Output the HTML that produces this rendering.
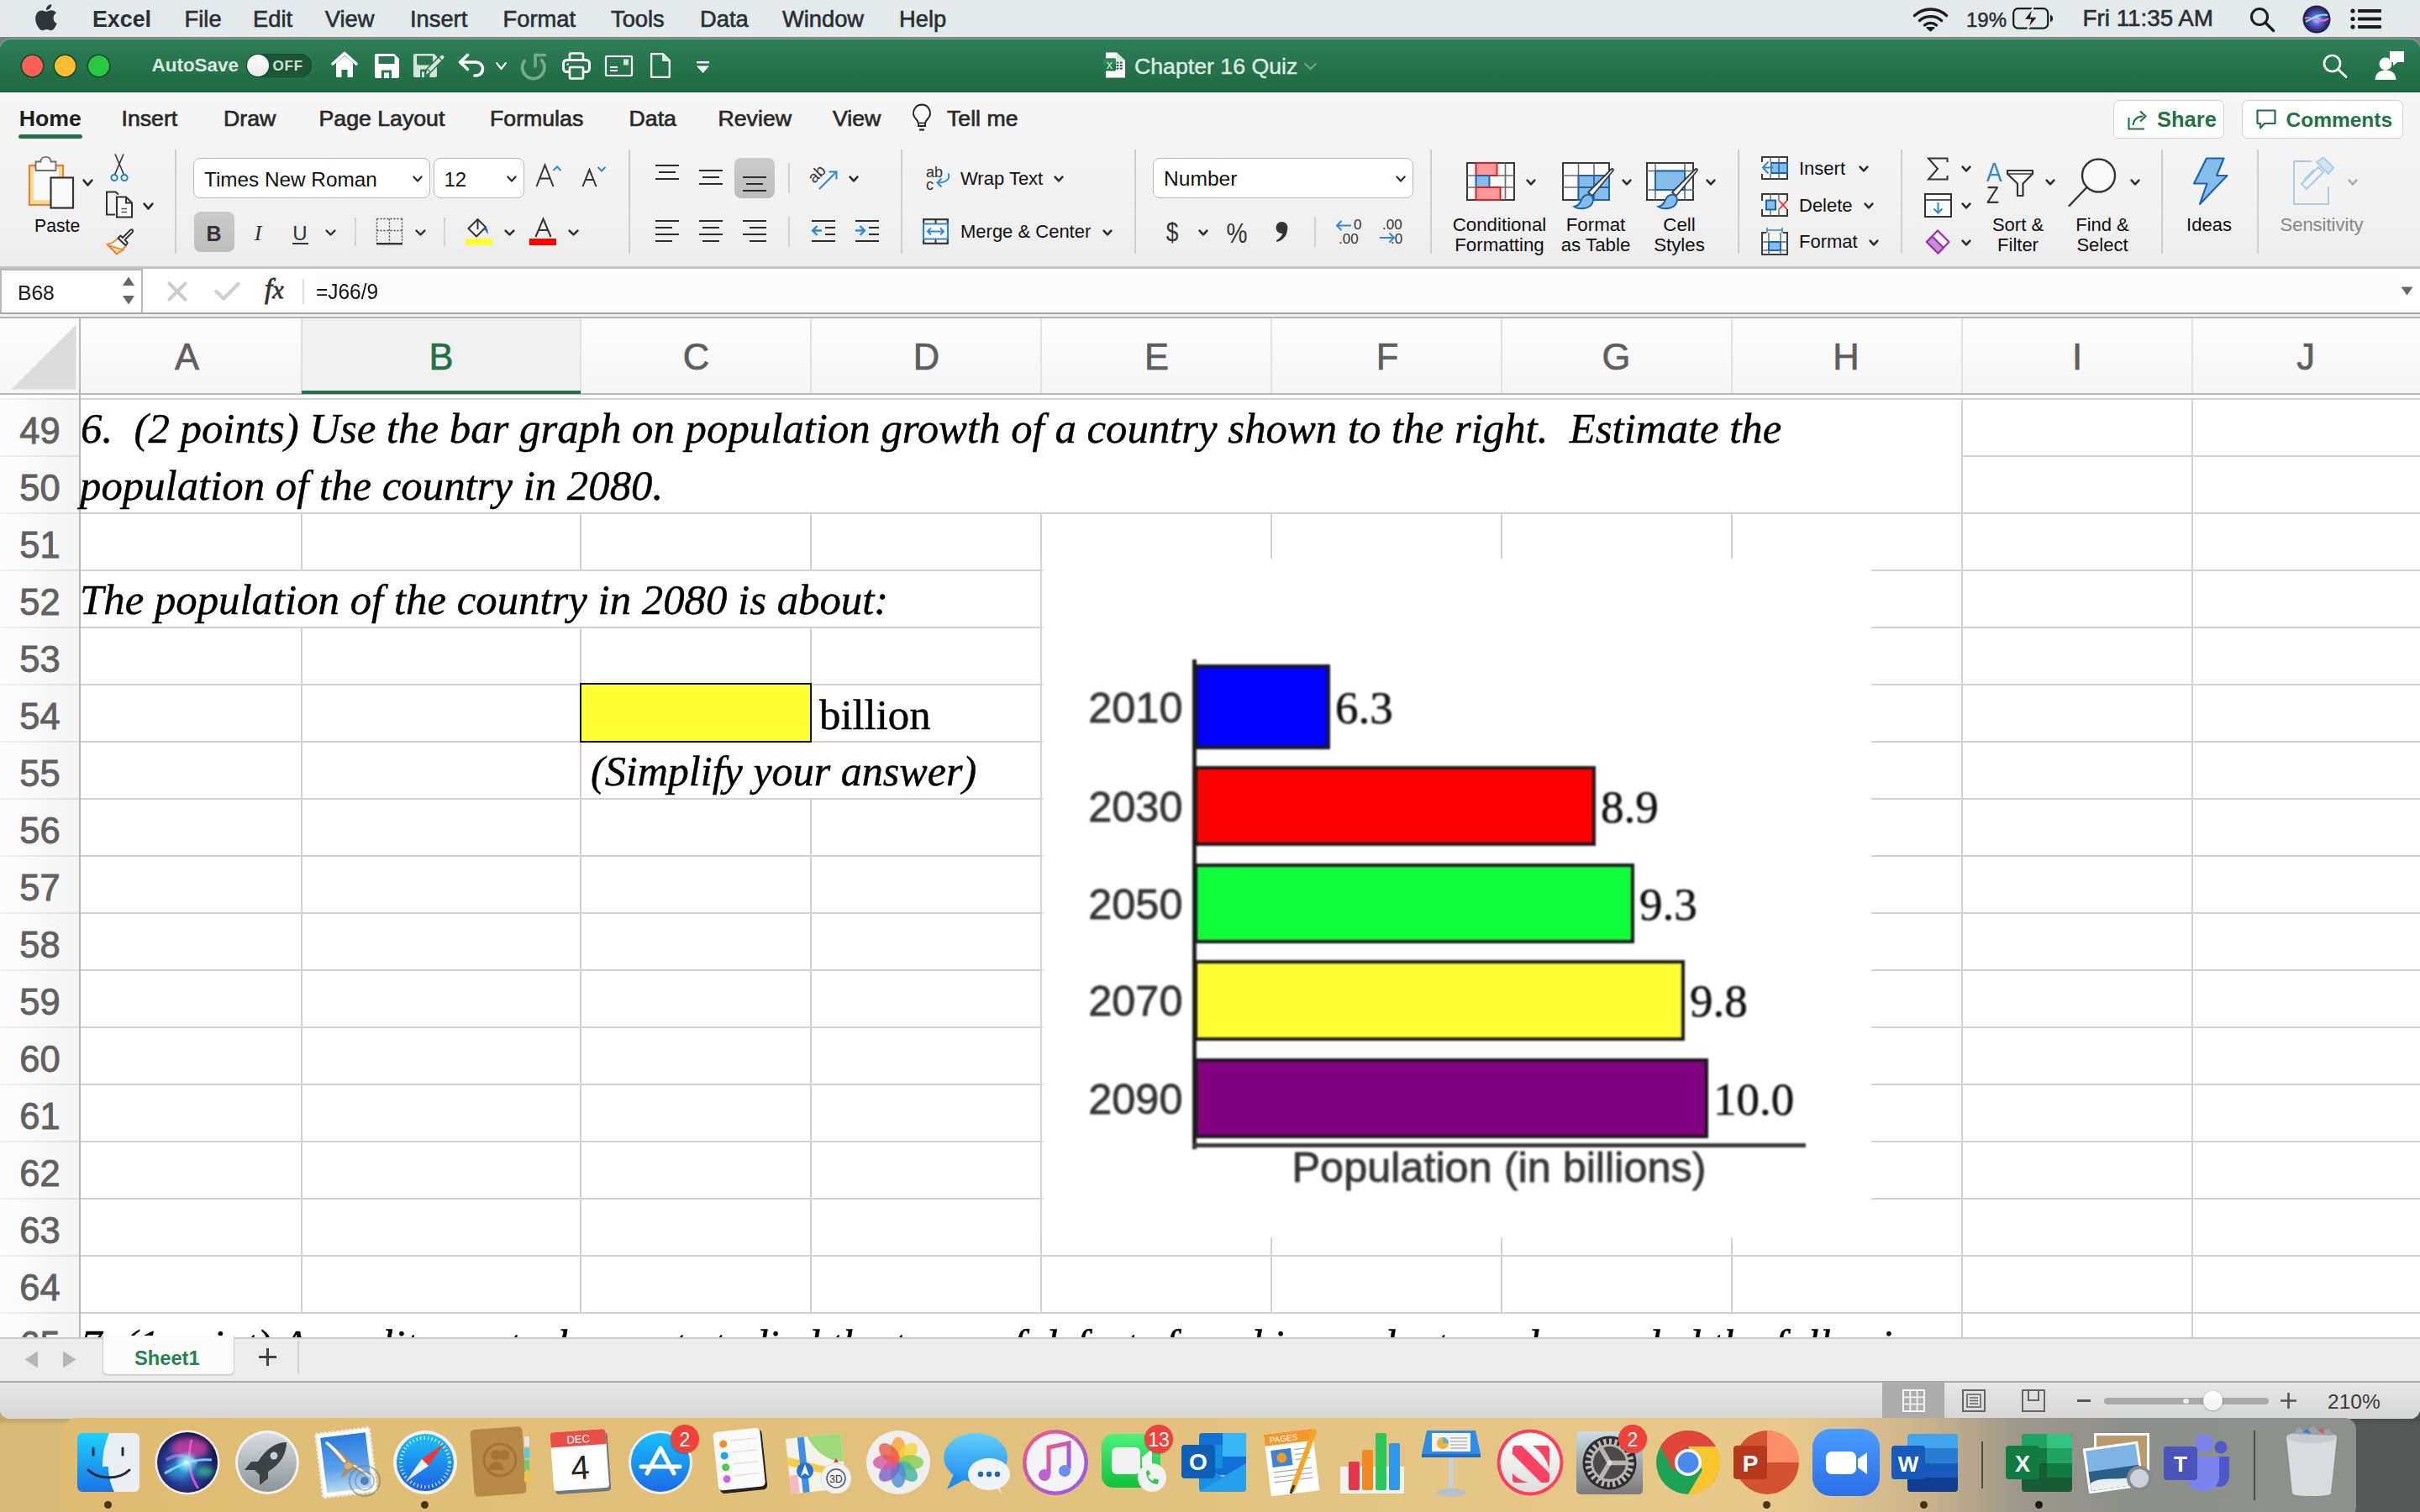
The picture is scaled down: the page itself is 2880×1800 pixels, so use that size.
<!DOCTYPE html><html><head><meta charset="utf-8"><style>html,body{margin:0;padding:0;width:2880px;height:1800px;overflow:hidden;background:#fff;position:relative;font-family:"Liberation Sans",sans-serif}.t{position:absolute;line-height:0;white-space:pre}.r{position:absolute}.s{position:absolute;overflow:visible}</style></head><body>
<div class="r" style="left:0px;top:0px;width:2880px;height:1800px;background:#7d7d7d"></div>
<div class="r" style="left:0px;top:1600px;width:2880px;height:200px;background:linear-gradient(90deg,#c9a967 0,#dcbd7c 1500px,#d6b77a 2150px,#7c7b76 2400px,#5b5d5c 2600px,#4f5150 2880px)"></div>
<div class="r" style="left:0px;top:0px;width:2880px;height:44px;background:#e4e9ec"></div>
<div class="r" style="left:0px;top:44px;width:2880px;height:2px;background:#7a8187"></div>
<div class="r" style="left:0px;top:46px;width:2880px;height:1643px;background:#f3f3f3;border-radius:12px 12px 12px 12px;overflow:hidden"></div>
<div class="r" style="left:0px;top:46px;width:2880px;height:64px;background:linear-gradient(#2f7f59,#236f48 70%,#1f6b44);border-radius:12px 12px 0 0;box-shadow:inset 0 1px 0 #7fb294"></div>
<div class="r" style="left:0px;top:108px;width:2880px;height:2px;background:#195c39"></div>
<svg class="s" style="left:42px;top:3.5px;" width="28" height="31" viewBox="0 0 28 31"><path fill="#30373b" d="M23.2 16.6c0-4.3 3.5-6.3 3.7-6.4-2-2.9-5.1-3.3-6.2-3.4-2.6-.3-5.2 1.6-6.5 1.6-1.4 0-3.4-1.5-5.6-1.5C5.7 6.9 3 8.6 1.6 11.2c-3 5.2-.8 12.9 2.2 17.1 1.4 2.1 3.1 4.4 5.3 4.3 2.1-.1 3-1.4 5.5-1.4s3.3 1.4 5.6 1.3c2.3 0 3.7-2.1 5.1-4.2 1.6-2.4 2.3-4.7 2.3-4.8-.1 0-4.4-1.7-4.4-6.9zM19 4.1C20.2 2.7 21 .8 20.7-1.1c-1.7.1-3.7 1.1-4.9 2.5-1.1 1.2-2 3.2-1.8 5 1.9.2 3.8-.9 5-2.3z" transform="translate(0,2) scale(0.93)"/></svg>
<div class="t" style="left:110px;top:22.71px;font-size:26.8px;font-family:'Liberation Sans', sans-serif;font-weight:700;color:#2a3034;font-style:normal;">Excel</div>
<div class="t" style="left:219.6px;top:22.54px;font-size:27.3px;font-family:'Liberation Sans', sans-serif;font-weight:400;color:#2a3034;font-style:normal;-webkit-text-stroke:0.6px #2a3034">File</div>
<div class="t" style="left:301px;top:22.54px;font-size:27.3px;font-family:'Liberation Sans', sans-serif;font-weight:400;color:#2a3034;font-style:normal;-webkit-text-stroke:0.6px #2a3034">Edit</div>
<div class="t" style="left:386.8px;top:22.54px;font-size:27.3px;font-family:'Liberation Sans', sans-serif;font-weight:400;color:#2a3034;font-style:normal;-webkit-text-stroke:0.6px #2a3034">View</div>
<div class="t" style="left:488px;top:22.54px;font-size:27.3px;font-family:'Liberation Sans', sans-serif;font-weight:400;color:#2a3034;font-style:normal;-webkit-text-stroke:0.6px #2a3034">Insert</div>
<div class="t" style="left:598.6px;top:22.54px;font-size:27.3px;font-family:'Liberation Sans', sans-serif;font-weight:400;color:#2a3034;font-style:normal;-webkit-text-stroke:0.6px #2a3034">Format</div>
<div class="t" style="left:727px;top:22.54px;font-size:27.3px;font-family:'Liberation Sans', sans-serif;font-weight:400;color:#2a3034;font-style:normal;-webkit-text-stroke:0.6px #2a3034">Tools</div>
<div class="t" style="left:833px;top:22.54px;font-size:27.3px;font-family:'Liberation Sans', sans-serif;font-weight:400;color:#2a3034;font-style:normal;-webkit-text-stroke:0.6px #2a3034">Data</div>
<div class="t" style="left:931px;top:22.54px;font-size:27.3px;font-family:'Liberation Sans', sans-serif;font-weight:400;color:#2a3034;font-style:normal;-webkit-text-stroke:0.6px #2a3034">Window</div>
<div class="t" style="left:1070px;top:22.54px;font-size:27.3px;font-family:'Liberation Sans', sans-serif;font-weight:400;color:#2a3034;font-style:normal;-webkit-text-stroke:0.6px #2a3034">Help</div>
<svg class="s" style="left:2276px;top:7px;" width="43" height="30" viewBox="0 0 43 30"><path d="M2.5 11.5 C13 1.5 30 1.5 40.5 11.5" fill="none" stroke="#1c1c1c" stroke-width="3.4" stroke-linecap="round"/><path d="M8.5 17.5 C15.5 11 27.5 11 34.5 17.5" fill="none" stroke="#1c1c1c" stroke-width="3.4" stroke-linecap="round"/><path d="M14.5 23 C18.5 19.5 24.5 19.5 28.5 23" fill="none" stroke="#1c1c1c" stroke-width="3.4" stroke-linecap="round"/><path d="M17.5 26 L21.5 29.5 L25.5 26 Z" fill="#1c1c1c" stroke="#1c1c1c" stroke-width="2" stroke-linejoin="round"/></svg>
<div class="t" style="left:2340px;top:23.68px;font-size:24px;font-family:'Liberation Sans', sans-serif;font-weight:400;color:#2a3034;font-style:normal;-webkit-text-stroke:0.5px #2a3034">19%</div>
<svg class="s" style="left:2395px;top:8px;" width="49" height="28" viewBox="0 0 49 28"><rect x="1.2" y="2.2" width="41" height="23.5" rx="5.5" fill="none" stroke="#1c1c1c" stroke-width="2.2"/><path d="M45 10 C47 10 48 11.5 48 14 C48 16.5 47 18 45 18 Z" fill="#1c1c1c"/><path d="M24.5 1 L13.5 15.5 H21.5 L18 27 L30 12 H22 Z" fill="#1c1c1c" stroke="#e6eaed" stroke-width="1.6"/></svg>
<div class="t" style="left:2478.5px;top:22.37px;font-size:27.8px;font-family:'Liberation Sans', sans-serif;font-weight:400;color:#2a3034;font-style:normal;-webkit-text-stroke:0.6px #2a3034">Fri 11:35 AM</div>
<svg class="s" style="left:2677px;top:8px;" width="31" height="30" viewBox="0 0 31 30"><circle cx="12" cy="12" r="9.5" fill="none" stroke="#1c1c1c" stroke-width="3"/><path d="M19 19 L28.5 28.5" stroke="#1c1c1c" stroke-width="3.4" stroke-linecap="round"/></svg>
<svg class="s" style="left:2739px;top:6px;" width="36" height="34" viewBox="0 0 36 34"><defs><radialGradient id="siri0" cx=".5" cy=".5" r=".5"><stop offset="0" stop-color="#b4f2ff"/><stop offset=".4" stop-color="#5a5fd8"/><stop offset="1" stop-color="#1a1840"/></radialGradient></defs><circle cx="18" cy="17" r="16.5" fill="url(#siri0)"/><path d="M4 16 C12 11 22 24 32 16" fill="none" stroke="#ff66cc" stroke-width="2.2"/><path d="M5 20 C14 15 22 10 31 12" fill="none" stroke="#66ffee" stroke-width="2"/></svg>
<svg class="s" style="left:2797px;top:10px;" width="38" height="26" viewBox="0 0 38 26"><g fill="#1c1c1c"><circle cx="3" cy="3" r="2.6"/><circle cx="3" cy="12.5" r="2.6"/><circle cx="3" cy="22" r="2.6"/><rect x="9" y="1" width="28" height="4" rx="1"/><rect x="9" y="10.5" width="28" height="4" rx="1"/><rect x="9" y="20" width="28" height="4" rx="1"/></g></svg>
<div class="r" style="left:25.5px;top:65.5px;width:25px;height:25px;border-radius:50%;background:#fe5f57;box-shadow:0 0 0 1.5px rgba(10,50,30,.7)"></div>
<div class="r" style="left:65.2px;top:65.5px;width:25px;height:25px;border-radius:50%;background:#febc2e;box-shadow:0 0 0 1.5px rgba(10,50,30,.7)"></div>
<div class="r" style="left:105.3px;top:65.5px;width:25px;height:25px;border-radius:50%;background:#28c840;box-shadow:0 0 0 1.5px rgba(10,50,30,.7)"></div>
<div class="t" style="left:180.6px;top:78.24px;font-size:22.4px;font-family:'Liberation Sans', sans-serif;font-weight:700;color:#dcebe2;font-style:normal;">AutoSave</div>
<div class="r" style="left:293px;top:64px;width:78px;height:28px;background:#1c5536;border-radius:14px;box-shadow:inset 0 0 0 1px #174a2f"></div>
<div class="r" style="left:294px;top:65px;width:26px;height:26px;background:linear-gradient(#fff,#e8e8e8);border-radius:50%;box-shadow:0 1px 1px rgba(0,0,0,.3)"></div>
<div class="t" style="left:324.5px;top:79.11px;font-size:17px;font-family:'Liberation Sans', sans-serif;font-weight:700;color:#d0e3d7;font-style:normal;letter-spacing:0.8px">OFF</div>
<svg class="s" style="left:393px;top:61px;" width="34" height="32" viewBox="0 0 34 32"><path d="M3 15 L17 2.5 L31 15" fill="none" stroke="#ffffff" stroke-width="3.6" stroke-linecap="round" stroke-linejoin="round"/><path d="M7 14 L17 5.5 L27 14 V29.5 a1.5 1.5 0 0 1 -1.5 1.5 H20.5 V22 H13.5 V31 H8.5 a1.5 1.5 0 0 1 -1.5 -1.5 Z" fill="#ffffff"/></svg>
<svg class="s" style="left:445.5px;top:63.5px;" width="29" height="29" viewBox="0 0 29 29"><path d="M2 0 H23 L29 6 V27 a2 2 0 0 1 -2 2 H2 a2 2 0 0 1 -2 -2 V2 a2 2 0 0 1 2 -2 Z" fill="#ffffff"/><rect x="4.5" y="3" width="19" height="9" fill="#2a7650"/><rect x="8" y="19.5" width="12" height="9.5" fill="#2a7650"/><rect x="11" y="22.5" width="6" height="6.5" fill="#ffffff"/></svg>
<svg class="s" style="left:491px;top:63px;" width="38" height="30" viewBox="0 0 38 30"><path d="M3 1 H25.5 L29 4.5 V27 A2 2 0 0 1 27 29 H3 A2 2 0 0 1 1 27 V3 A2 2 0 0 1 3 1 Z" fill="#d6e5dc"/><path d="M5 3.5 H24 V12 A2 2 0 0 1 22 14.5 H7 A2 2 0 0 1 5 12.5 Z" fill="#2a7650"/><rect x="9" y="19.5" width="11.5" height="9.5" fill="#2a7650"/><rect x="11" y="22.5" width="3" height="6.5" fill="#d6e5dc"/><path d="M14.5 27.5 L17 19 L33 3 C34.5 1.5 36.5 1.5 37.5 3 C38.8 4.3 38.5 6 37 7.5 L21 23.5 Z" fill="#d6e5dc" stroke="#2a7650" stroke-width="1.6" stroke-linejoin="round"/><path d="M18 19.5 L21 22.5 M31 5 L35 9" stroke="#2a7650" stroke-width="1.4"/></svg>
<svg class="s" style="left:545px;top:63px;" width="34" height="30" viewBox="0 0 34 30"><path d="M11.5 2.5 L2.5 11 L11.5 19.5" fill="none" stroke="#ffffff" stroke-width="3.6" stroke-linecap="round" stroke-linejoin="round"/><path d="M3 11 H21.5 A8 8 0 0 1 21.5 27 H20" fill="none" stroke="#ffffff" stroke-width="3.6" stroke-linecap="round"/></svg>
<svg class="s" style="left:589.5px;top:74px;" width="13" height="9.5" viewBox="0 0 13 9.5"><path d="M1.2 1.2 L6.5 8 L11.8 1.2" fill="none" stroke="#ffffff" stroke-width="2.1" stroke-linecap="round" stroke-linejoin="round"/></svg>
<svg class="s" style="left:618px;top:62px;" width="34" height="34" viewBox="0 0 34 34"><path d="M6.2 10.5 A13.2 13.2 0 1 0 26.5 9.5" fill="none" stroke="#76ab8c" stroke-width="3.6" stroke-linecap="round"/><path d="M19 17 V3.5 H30.5" fill="none" stroke="#76ab8c" stroke-width="3.6" stroke-linecap="round" stroke-linejoin="miter"/></svg>
<svg class="s" style="left:669px;top:61.5px;" width="34" height="33" viewBox="0 0 34 33"><rect x="9" y="1.5" width="16" height="8" rx="1.5" fill="none" stroke="#ffffff" stroke-width="2.6"/><rect x="1.5" y="9.5" width="31" height="14" rx="4" fill="none" stroke="#ffffff" stroke-width="3"/><rect x="9" y="18" width="16" height="13.5" rx="1" fill="#2a7650" stroke="#ffffff" stroke-width="2.6"/><rect x="5.5" y="13.5" width="2.5" height="2" fill="#ffffff"/></svg>
<svg class="s" style="left:719.5px;top:65.5px;" width="33" height="25" viewBox="0 0 33 25"><rect x="1" y="1" width="31" height="23" rx="1" fill="none" stroke="#ffffff" stroke-width="2.2"/><rect x="22" y="4.5" width="6" height="7" fill="#d3e4d9"/><rect x="6" y="13" width="9" height="2" fill="#ffffff"/><rect x="6" y="17" width="9" height="2" fill="#ffffff"/></svg>
<svg class="s" style="left:774px;top:63px;" width="24" height="30" viewBox="0 0 24 30"><path d="M1.2 1.2 H15 L22.8 9 V28.8 H1.2 Z" fill="none" stroke="#ffffff" stroke-width="2.2" stroke-linejoin="round"/><path d="M15 1.2 V9 H22.8" fill="#d3e4d9" stroke="#ffffff" stroke-width="1.5"/></svg>
<svg class="s" style="left:827.5px;top:72.5px;" width="17" height="15" viewBox="0 0 17 15"><rect x="1" y="0" width="15" height="2.4" fill="#ffffff"/><path d="M1 5.5 H16 L8.5 14 Z" fill="#ffffff"/></svg>
<svg class="s" style="left:1313px;top:62px;" width="27" height="31" viewBox="0 0 27 31"><path d="M3 0.5 H16 L26 10 V30.5 H3 Z" fill="#fff"/><path d="M16 0.5 V10 H26" fill="#d9e6de"/><g fill="#1e6b43"><rect x="15.5" y="11.5" width="3" height="2.2"/><rect x="19.8" y="11.5" width="3" height="2.2"/><rect x="15.5" y="15" width="3" height="2.2"/><rect x="19.8" y="15" width="3" height="2.2"/><rect x="15.5" y="18.5" width="3" height="2.2"/><rect x="19.8" y="18.5" width="3" height="2.2"/></g><rect x="0" y="7.5" width="15" height="15" rx="1.5" fill="#1f7a4b"/><rect x="0" y="7.5" width="15" height="7" rx="1.5" fill="#2b8c59"/><text x="7.5" y="19.5" font-family="Liberation Sans" font-size="11" fill="#fff" text-anchor="middle">X</text></svg>
<div class="t" style="left:1350px;top:79.25px;font-size:26.7px;font-family:'Liberation Sans', sans-serif;font-weight:400;color:#dfece5;font-style:normal;-webkit-text-stroke:0.4px #dfece5">Chapter 16 Quiz</div>
<svg class="s" style="left:1551px;top:74px;" width="17" height="10" viewBox="0 0 17 10"><path d="M1.5 1.5 L8.5 8 L15.5 1.5" fill="none" stroke="#6fa687" stroke-width="2.2"/></svg>
<svg class="s" style="left:2764px;top:64px;" width="30" height="29" viewBox="0 0 30 29"><circle cx="11.5" cy="11.5" r="9.5" fill="none" stroke="#ffffff" stroke-width="2.6"/><path d="M18.5 18.5 L28 27.5" stroke="#ffffff" stroke-width="2.8" stroke-linecap="round"/></svg>
<svg class="s" style="left:2825px;top:59px;" width="38" height="37" viewBox="0 0 38 37"><circle cx="14" cy="17" r="7.5" fill="#ffffff"/><path d="M1.5 36 C2 28 7 24.5 14 24.5 C21 24.5 26 28 26.5 36 Z" fill="#ffffff"/><path d="M19 2 H36 V15 H28 L23 19.5 V15 H19 Z" fill="#ffffff"/></svg>
<div class="r" style="left:0px;top:110px;width:2880px;height:208px;background:linear-gradient(#f6f6f6,#f2f2f2 60%,#ececec)"></div>
<div class="r" style="left:0px;top:317px;width:2880px;height:3px;background:#c3c3c3"></div>
<div class="t" style="left:22.7px;top:140.75px;font-size:26.7px;font-family:'Liberation Sans', sans-serif;font-weight:700;color:#1e1e1e;font-style:normal;">Home</div>
<div class="r" style="left:22px;top:160px;width:76px;height:5px;background:#217346;border-radius:3px"></div>
<div class="t" style="left:144.5px;top:140.75px;font-size:26.7px;font-family:'Liberation Sans', sans-serif;font-weight:400;color:#2a2a2a;font-style:normal;-webkit-text-stroke:0.7px #2a2a2a">Insert</div>
<div class="t" style="left:266px;top:140.75px;font-size:26.7px;font-family:'Liberation Sans', sans-serif;font-weight:400;color:#2a2a2a;font-style:normal;-webkit-text-stroke:0.7px #2a2a2a">Draw</div>
<div class="t" style="left:379.5px;top:140.75px;font-size:26.7px;font-family:'Liberation Sans', sans-serif;font-weight:400;color:#2a2a2a;font-style:normal;-webkit-text-stroke:0.7px #2a2a2a">Page Layout</div>
<div class="t" style="left:583px;top:140.75px;font-size:26.7px;font-family:'Liberation Sans', sans-serif;font-weight:400;color:#2a2a2a;font-style:normal;-webkit-text-stroke:0.7px #2a2a2a">Formulas</div>
<div class="t" style="left:748.6px;top:140.75px;font-size:26.7px;font-family:'Liberation Sans', sans-serif;font-weight:400;color:#2a2a2a;font-style:normal;-webkit-text-stroke:0.7px #2a2a2a">Data</div>
<div class="t" style="left:854.5px;top:140.75px;font-size:26.7px;font-family:'Liberation Sans', sans-serif;font-weight:400;color:#2a2a2a;font-style:normal;-webkit-text-stroke:0.7px #2a2a2a">Review</div>
<div class="t" style="left:991px;top:140.75px;font-size:26.7px;font-family:'Liberation Sans', sans-serif;font-weight:400;color:#2a2a2a;font-style:normal;-webkit-text-stroke:0.7px #2a2a2a">View</div>
<svg class="s" style="left:1085px;top:123px;" width="24" height="33" viewBox="0 0 24 33"><path d="M12 1.5 a10 10 0 0 0 -7 17 c1.5 1.6 2.5 3.2 3 5.5 V27 H16 V24 c.5 -2.3 1.5 -3.9 3 -5.5 A10 10 0 0 0 12 1.5 Z" fill="#fafafa" stroke="#222" stroke-width="1.9"/><path d="M8.5 23.5 H15.5" stroke="#222" stroke-width="1.6"/><path d="M9 31.5 H15" stroke="#222" stroke-width="2.2"/></svg>
<div class="t" style="left:1127px;top:140.75px;font-size:26.7px;font-family:'Liberation Sans', sans-serif;font-weight:400;color:#2a2a2a;font-style:normal;-webkit-text-stroke:0.7px #2a2a2a">Tell me</div>
<div class="r" style="left:2515px;top:119px;width:132px;height:46px;background:#fff;border:1.5px solid #d2d2d2;border-radius:7px;box-sizing:border-box"></div>
<svg class="s" style="left:2532px;top:130px;" width="24" height="25" viewBox="0 0 24 25"><path d="M1.5 10 V23.5 H20" fill="none" stroke="#217346" stroke-width="2.2"/><path d="M6.5 19 C7.5 12 11.5 8.5 18.5 8.5" fill="none" stroke="#217346" stroke-width="2.2"/><path d="M15 2.5 L21.5 8.5 L15 14.5" fill="none" stroke="#217346" stroke-width="2.2" stroke-linejoin="round"/></svg>
<div class="t" style="left:2567px;top:142.16px;font-size:25.5px;font-family:'Liberation Sans', sans-serif;font-weight:700;color:#217346;font-style:normal;">Share</div>
<div class="r" style="left:2668px;top:119px;width:192px;height:46px;background:#fff;border:1.5px solid #d2d2d2;border-radius:7px;box-sizing:border-box"></div>
<svg class="s" style="left:2685px;top:130px;" width="24" height="25" viewBox="0 0 24 25"><path d="M1.5 1.5 H22.5 V17 H10 L5 22.5 V17 H1.5 Z" fill="none" stroke="#217346" stroke-width="2.2" stroke-linejoin="round"/></svg>
<div class="t" style="left:2720.5px;top:142.51px;font-size:24.5px;font-family:'Liberation Sans', sans-serif;font-weight:700;color:#217346;font-style:normal;">Comments</div>
<div class="r" style="left:208px;top:178px;width:2px;height:124px;background:#cdcdcd"></div>
<div class="r" style="left:748px;top:178px;width:2px;height:124px;background:#cdcdcd"></div>
<div class="r" style="left:1072px;top:178px;width:2px;height:124px;background:#cdcdcd"></div>
<div class="r" style="left:1350px;top:178px;width:2px;height:124px;background:#cdcdcd"></div>
<div class="r" style="left:1702px;top:178px;width:2px;height:124px;background:#cdcdcd"></div>
<div class="r" style="left:2068px;top:178px;width:2px;height:124px;background:#cdcdcd"></div>
<div class="r" style="left:2262px;top:178px;width:2px;height:124px;background:#cdcdcd"></div>
<div class="r" style="left:2572px;top:178px;width:2px;height:124px;background:#cdcdcd"></div>
<div class="r" style="left:2686px;top:178px;width:2px;height:124px;background:#cdcdcd"></div>
<svg class="s" style="left:33px;top:186px;" width="56" height="63" viewBox="0 0 56 63"><rect x="2" y="11" width="40" height="47" fill="#f7da9a" stroke="#e8832f" stroke-width="2.2"/><rect x="7" y="15" width="30" height="37" fill="#fafafa"/><path d="M9.5 17 V6.5 H15.5 C15.5 2.5 18 0.8 21.5 0.8 C25 0.8 27.5 2.5 27.5 6.5 H33.5 V17 Z" fill="#fafafa" stroke="#6e6e6e" stroke-width="1.8"/><rect x="27.5" y="25.5" width="26.5" height="36" fill="#fafafa" stroke="#333" stroke-width="2.2"/></svg>
<svg class="s" style="left:97.5px;top:212.5px;" width="13" height="9" viewBox="0 0 13 9"><path d="M1.6 1.6 L6.5 7.4 L11.399999999999999 1.6" fill="none" stroke="#2d2d2d" stroke-width="2.6" stroke-linecap="round" stroke-linejoin="round"/></svg>
<div class="t" style="left:41px;top:268.65px;font-size:21.2px;font-family:'Liberation Sans', sans-serif;font-weight:400;color:#111;font-style:normal;">Paste</div>
<svg class="s" style="left:131px;top:183px;" width="22" height="34" viewBox="0 0 22 34"><path d="M5.5 25 L16 0.5 M16.5 25 L6 0.5" stroke="#333" stroke-width="1.6"/><circle cx="5" cy="28.5" r="3.6" fill="none" stroke="#1f7fd0" stroke-width="2"/><circle cx="17" cy="28.5" r="3.6" fill="none" stroke="#1f7fd0" stroke-width="2"/></svg>
<svg class="s" style="left:125px;top:227px;" width="34" height="34" viewBox="0 0 34 34"><path d="M12 28.5 H2 V1.5 H12.5 L16 4.5" fill="none" stroke="#333" stroke-width="2"/><path d="M14 7.5 H25 L32 14.5 V31.5 H14 Z" fill="#fafafa" stroke="#333" stroke-width="2.1"/><path d="M25 7.5 V14.5 H32" fill="none" stroke="#333" stroke-width="2"/><path d="M19.5 21.5 H26 M19.5 25.5 H26" stroke="#555" stroke-width="1.6"/></svg>
<svg class="s" style="left:169.5px;top:240.5px;" width="13" height="9" viewBox="0 0 13 9"><path d="M1.6 1.6 L6.5 7.4 L11.399999999999999 1.6" fill="none" stroke="#2d2d2d" stroke-width="2.6" stroke-linecap="round" stroke-linejoin="round"/></svg>
<svg class="s" style="left:125px;top:271px;" width="34" height="33" viewBox="0 0 34 33"><path d="M2.5 20 C8 19 12.5 16 15.5 12.5 L25 22 L14 31.5 Z" fill="#fafafa" stroke="#e8832f" stroke-width="1.8" stroke-linejoin="round"/><path d="M4 21 L22 26.5 L14 31 Z" fill="#f7da9a" stroke="#e8832f" stroke-width="1.6"/><path d="M15.5 12.5 L18.5 9.5 L21 12 L30 3 C31 2 32.5 2 33 3 C33.5 3.8 33.3 4.8 32.5 5.5 L23.5 14.5 L26 17 C26.8 17.8 26.8 18.8 26 19.5 L24.5 21 Z" fill="#fafafa" stroke="#333" stroke-width="1.9" stroke-linejoin="round"/></svg>
<div class="r" style="left:230px;top:188px;width:282px;height:48px;background:#fff;border:1.5px solid #bdbdbd;border-radius:8px;box-sizing:border-box"></div>
<div class="t" style="left:243px;top:213.58px;font-size:24.3px;font-family:'Liberation Sans', sans-serif;font-weight:400;color:#111;font-style:normal;">Times New Roman</div>
<svg class="s" style="left:491px;top:209px;" width="12" height="8" viewBox="0 0 12 8"><path d="M1.4000000000000001 1.4000000000000001 L6.0 6.6000000000000005 L10.6 1.4000000000000001" fill="none" stroke="#2d2d2d" stroke-width="2.2" stroke-linecap="round" stroke-linejoin="round"/></svg>
<div class="r" style="left:516px;top:188px;width:108px;height:48px;background:#fff;border:1.5px solid #bdbdbd;border-radius:8px;box-sizing:border-box"></div>
<div class="t" style="left:528.5px;top:213.68px;font-size:24px;font-family:'Liberation Sans', sans-serif;font-weight:400;color:#111;font-style:normal;">12</div>
<svg class="s" style="left:603px;top:209px;" width="12" height="8" viewBox="0 0 12 8"><path d="M1.4000000000000001 1.4000000000000001 L6.0 6.6000000000000005 L10.6 1.4000000000000001" fill="none" stroke="#2d2d2d" stroke-width="2.2" stroke-linecap="round" stroke-linejoin="round"/></svg>
<svg class="s" style="left:636px;top:195px;" width="34" height="28" viewBox="0 0 34 28"><path d="M2.5 27 L12.5 1.5 L22.5 27 M6.5 17.5 H18.5" fill="none" stroke="#333" stroke-width="2"/><path d="M22.5 8 L27 3.5 L31.5 8" fill="none" stroke="#2b8ad8" stroke-width="2"/></svg>
<svg class="s" style="left:691px;top:196px;" width="32" height="27" viewBox="0 0 32 27"><path d="M2.5 26 L10.5 6 L18.5 26 M5.5 18 H15.5" fill="none" stroke="#333" stroke-width="2"/><path d="M20.5 3 L25 7.5 L29.5 3" fill="none" stroke="#2b8ad8" stroke-width="2"/></svg>
<div class="r" style="left:230.5px;top:252px;width:48px;height:48px;background:linear-gradient(#cacaca,#bdbdbd);border-radius:8px"></div>
<div class="t" style="left:254.5px;top:278.34px;font-size:25px;font-family:'Liberation Sans', sans-serif;font-weight:700;color:#333;font-style:normal;transform:translateX(-50%);">B</div>
<div class="t" style="left:307px;top:278.23px;font-size:26px;font-family:'Liberation Serif', serif;font-weight:400;color:#333;font-style:italic;transform:translateX(-50%);">I</div>
<div class="t" style="left:357px;top:277.68px;font-size:24px;font-family:'Liberation Sans', sans-serif;font-weight:400;color:#333;font-style:normal;transform:translateX(-50%);">U</div>
<div class="r" style="left:347.5px;top:289px;width:19px;height:2px;background:#333"></div>
<svg class="s" style="left:387px;top:273px;" width="13" height="8" viewBox="0 0 13 8"><path d="M1.5 1.5 L6.5 6.5 L11.5 1.5" fill="none" stroke="#2d2d2d" stroke-width="2.4" stroke-linecap="round" stroke-linejoin="round"/></svg>
<div class="r" style="left:422px;top:259px;width:2px;height:34px;background:#d3d3d3"></div>
<svg class="s" style="left:446.5px;top:259px;" width="33" height="33" viewBox="0 0 33 33"><g fill="#333"><rect x="1" y="30" width="31" height="2.4"/></g><g stroke="#444" stroke-width="1.3" stroke-dasharray="2 2"><path d="M1.5 1.5 H31.5 M1.5 1.5 V30 M31.5 1.5 V30 M1.5 15.5 H31.5 M16.5 1.5 V30"/></g></svg>
<svg class="s" style="left:494px;top:273px;" width="13" height="8" viewBox="0 0 13 8"><path d="M1.5 1.5 L6.5 6.5 L11.5 1.5" fill="none" stroke="#2d2d2d" stroke-width="2.4" stroke-linecap="round" stroke-linejoin="round"/></svg>
<div class="r" style="left:528px;top:259px;width:2px;height:34px;background:#d3d3d3"></div>
<svg class="s" style="left:556px;top:259px;" width="28" height="25" viewBox="0 0 28 25"><path d="M1.5 13 L12.5 2 L22 11.5 L11 22.5 Z" fill="#f8f8f8" stroke="#333" stroke-width="2" stroke-linejoin="round"/><path d="M12.5 2 V14" stroke="#333" stroke-width="2"/><path d="M21 12 C24 12 25 15 24.5 20 C23 17 22 15 20 14 Z" fill="#1565b8"/></svg>
<div class="r" style="left:554px;top:284px;width:32px;height:8px;background:#ffff33"></div>
<svg class="s" style="left:600px;top:273px;" width="13" height="8" viewBox="0 0 13 8"><path d="M1.6 1.6 L6.5 6.4 L11.399999999999999 1.6" fill="none" stroke="#2d2d2d" stroke-width="2.6" stroke-linecap="round" stroke-linejoin="round"/></svg>
<svg class="s" style="left:636px;top:259px;" width="21" height="24" viewBox="0 0 21 24"><path d="M1.5 23 L10.5 1.5 L19.5 23 M5 15 H16" fill="none" stroke="#333" stroke-width="2"/></svg>
<div class="r" style="left:630px;top:284px;width:32px;height:8px;background:#ff0000"></div>
<svg class="s" style="left:676px;top:273px;" width="13" height="8" viewBox="0 0 13 8"><path d="M1.6 1.6 L6.5 6.4 L11.399999999999999 1.6" fill="none" stroke="#2d2d2d" stroke-width="2.6" stroke-linecap="round" stroke-linejoin="round"/></svg>
<div class="r" style="left:780px;top:196px;width:28px;height:2.2px;background:#2b2b2b"></div>
<div class="r" style="left:784px;top:204px;width:20px;height:2.2px;background:#2b2b2b"></div>
<div class="r" style="left:780px;top:212px;width:28px;height:2.2px;background:#2b2b2b"></div>
<div class="r" style="left:832px;top:202px;width:28px;height:2.2px;background:#2b2b2b"></div>
<div class="r" style="left:836px;top:210px;width:20px;height:2.2px;background:#2b2b2b"></div>
<div class="r" style="left:832px;top:218px;width:28px;height:2.2px;background:#2b2b2b"></div>
<div class="r" style="left:874px;top:188px;width:48px;height:48px;background:linear-gradient(#cbcbcb,#bdbdbd);border-radius:8px"></div>
<div class="r" style="left:884px;top:210px;width:28px;height:2.2px;background:#2b2b2b"></div>
<div class="r" style="left:888px;top:218px;width:20px;height:2.2px;background:#2b2b2b"></div>
<div class="r" style="left:884px;top:226px;width:28px;height:2.2px;background:#2b2b2b"></div>
<div class="r" style="left:938px;top:194px;width:2px;height:36px;background:#d3d3d3"></div>
<svg class="s" style="left:960px;top:193px;" width="40" height="35" viewBox="0 0 40 35"><text x="0" y="0" transform="translate(9,26) rotate(-45)" font-family="Liberation Sans" font-size="19" fill="#333">ab</text><path d="M15 32 L35.5 11.5" stroke="#2b8ad8" stroke-width="2"/><path d="M26.5 11.5 H35.5 V20.5" fill="none" stroke="#2b8ad8" stroke-width="2"/></svg>
<svg class="s" style="left:1010px;top:209px;" width="12" height="8" viewBox="0 0 12 8"><path d="M1.6 1.6 L6.0 6.4 L10.399999999999999 1.6" fill="none" stroke="#2d2d2d" stroke-width="2.6" stroke-linecap="round" stroke-linejoin="round"/></svg>
<div class="r" style="left:780px;top:262px;width:28px;height:2.2px;background:#2b2b2b"></div>
<div class="r" style="left:780px;top:270px;width:20px;height:2.2px;background:#2b2b2b"></div>
<div class="r" style="left:780px;top:278px;width:28px;height:2.2px;background:#2b2b2b"></div>
<div class="r" style="left:780px;top:286px;width:20px;height:2.2px;background:#2b2b2b"></div>
<div class="r" style="left:832px;top:262px;width:28px;height:2.2px;background:#2b2b2b"></div>
<div class="r" style="left:836px;top:270px;width:20px;height:2.2px;background:#2b2b2b"></div>
<div class="r" style="left:832px;top:278px;width:28px;height:2.2px;background:#2b2b2b"></div>
<div class="r" style="left:836px;top:286px;width:20px;height:2.2px;background:#2b2b2b"></div>
<div class="r" style="left:884px;top:262px;width:28px;height:2.2px;background:#2b2b2b"></div>
<div class="r" style="left:892px;top:270px;width:20px;height:2.2px;background:#2b2b2b"></div>
<div class="r" style="left:884px;top:278px;width:28px;height:2.2px;background:#2b2b2b"></div>
<div class="r" style="left:892px;top:286px;width:20px;height:2.2px;background:#2b2b2b"></div>
<div class="r" style="left:938px;top:258px;width:2px;height:36px;background:#d3d3d3"></div>
<div class="r" style="left:966px;top:262px;width:28px;height:2.2px;background:#2b2b2b"></div>
<div class="r" style="left:982px;top:270px;width:12px;height:2.2px;background:#2b2b2b"></div>
<div class="r" style="left:982px;top:278px;width:12px;height:2.2px;background:#2b2b2b"></div>
<div class="r" style="left:966px;top:286px;width:28px;height:2.2px;background:#2b2b2b"></div>
<svg class="s" style="left:965px;top:266px;" width="14" height="17" viewBox="0 0 14 17"><path d="M13 8.5 H2.5 M7.5 3 L2 8.5 L7.5 14" fill="none" stroke="#2b8ad8" stroke-width="2.4"/></svg>
<div class="r" style="left:1018px;top:262px;width:28px;height:2.2px;background:#2b2b2b"></div>
<div class="r" style="left:1034px;top:270px;width:12px;height:2.2px;background:#2b2b2b"></div>
<div class="r" style="left:1034px;top:278px;width:12px;height:2.2px;background:#2b2b2b"></div>
<div class="r" style="left:1018px;top:286px;width:28px;height:2.2px;background:#2b2b2b"></div>
<svg class="s" style="left:1017px;top:266px;" width="14" height="17" viewBox="0 0 14 17"><path d="M1 8.5 H11.5 M6.5 3 L12 8.5 L6.5 14" fill="none" stroke="#2b8ad8" stroke-width="2.4"/></svg>
<svg class="s" style="left:1101px;top:194px;" width="32" height="36" viewBox="0 0 32 36"><text x="1" y="17" font-family="Liberation Sans" font-size="18" fill="#333">ab</text><text x="1" y="32" font-family="Liberation Sans" font-size="18" fill="#333">c</text><path d="M27.5 12.5 C30 18 26 23.5 15 23.5 M19.5 18.5 L14.5 23.5 L19.5 28.5" fill="none" stroke="#2b8ad8" stroke-width="1.9"/></svg>
<div class="t" style="left:1143px;top:212.88px;font-size:22px;font-family:'Liberation Sans', sans-serif;font-weight:400;color:#111;font-style:normal;">Wrap Text</div>
<svg class="s" style="left:1254px;top:209px;" width="12" height="8" viewBox="0 0 12 8"><path d="M1.6 1.6 L6.0 6.4 L10.399999999999999 1.6" fill="none" stroke="#2d2d2d" stroke-width="2.6" stroke-linecap="round" stroke-linejoin="round"/></svg>
<svg class="s" style="left:1097.5px;top:259.5px;" width="31" height="31" viewBox="0 0 31 31"><rect x="1.2" y="1.2" width="28.6" height="28.6" fill="#fff" stroke="#333" stroke-width="2.2"/><path d="M15.5 1 V6.5 M15.5 24.5 V30" stroke="#333" stroke-width="2"/><rect x="1.2" y="6.5" width="28.6" height="18" fill="#fff" stroke="#2b8ad8" stroke-width="2"/><path d="M6 15.5 H25 M10 11.5 L6 15.5 L10 19.5 M21 11.5 L25 15.5 L21 19.5" fill="none" stroke="#2b8ad8" stroke-width="2"/></svg>
<div class="t" style="left:1143px;top:276.38px;font-size:22px;font-family:'Liberation Sans', sans-serif;font-weight:400;color:#111;font-style:normal;">Merge &amp; Center</div>
<svg class="s" style="left:1312px;top:273px;" width="12" height="8" viewBox="0 0 12 8"><path d="M1.6 1.6 L6.0 6.4 L10.399999999999999 1.6" fill="none" stroke="#2d2d2d" stroke-width="2.6" stroke-linecap="round" stroke-linejoin="round"/></svg>
<div class="r" style="left:1372px;top:188px;width:310px;height:48px;background:#fff;border:1.5px solid #bdbdbd;border-radius:8px;box-sizing:border-box"></div>
<div class="t" style="left:1385px;top:213.48px;font-size:24.6px;font-family:'Liberation Sans', sans-serif;font-weight:400;color:#111;font-style:normal;">Number</div>
<svg class="s" style="left:1661px;top:209px;" width="12" height="8" viewBox="0 0 12 8"><path d="M1.4000000000000001 1.4000000000000001 L6.0 6.6000000000000005 L10.6 1.4000000000000001" fill="none" stroke="#2d2d2d" stroke-width="2.2" stroke-linecap="round" stroke-linejoin="round"/></svg>
<div class="t" style="left:1394.5px;top:277.26px;font-size:31px;font-family:'Liberation Sans', sans-serif;font-weight:400;color:#333;font-style:normal;transform:translateX(-50%);transform:translateX(-50%) scaleX(0.85)">$</div>
<svg class="s" style="left:1426px;top:273px;" width="12" height="8" viewBox="0 0 12 8"><path d="M1.6 1.6 L6.0 6.4 L10.399999999999999 1.6" fill="none" stroke="#2d2d2d" stroke-width="2.6" stroke-linecap="round" stroke-linejoin="round"/></svg>
<div class="t" style="left:1472px;top:277.57px;font-size:33px;font-family:'Liberation Sans', sans-serif;font-weight:400;color:#333;font-style:normal;transform:translateX(-50%);transform:translateX(-50%) scaleX(0.85)">%</div>
<svg class="s" style="left:1517px;top:263px;" width="16" height="26" viewBox="0 0 16 26"><circle cx="8.5" cy="8" r="7" fill="#333"/><path d="M15 9 C15 17 11 22.5 2.5 25 L2 23 C7 20.5 9.5 17 9.5 12 Z" fill="#333"/></svg>
<div class="r" style="left:1564px;top:258px;width:2px;height:36px;background:#d3d3d3"></div>
<svg class="s" style="left:1588px;top:259px;" width="36" height="33" viewBox="0 0 36 33"><path d="M20 9.5 H3 M8.5 4 L3 9.5 L8.5 15" fill="none" stroke="#2b8ad8" stroke-width="2"/><text x="23" y="14" font-family="Liberation Sans" font-size="17" fill="#333">0</text><text x="5" y="31" font-family="Liberation Sans" font-size="17" fill="#333">.00</text></svg>
<svg class="s" style="left:1640px;top:259px;" width="36" height="33" viewBox="0 0 36 33"><text x="5" y="14" font-family="Liberation Sans" font-size="17" fill="#333">.00</text><path d="M2 24 H19 M13.5 18.5 L19 24 L13.5 29.5" fill="none" stroke="#2b8ad8" stroke-width="2"/><text x="15" y="31" font-family="Liberation Sans" font-size="17" fill="#333">.0</text></svg>
<svg class="s" style="left:1745px;top:193px;" width="58" height="46" viewBox="0 0 58 46"><rect x="1" y="1" width="56" height="44" fill="#fafafa" stroke="#3a3a3a" stroke-width="2"/><path d="M1 16 H57 M1 30 H57 M46.5 1 V45" stroke="#6b6b6b" stroke-width="1.6"/><rect x="11.5" y="1" width="25" height="15" fill="#ff9a9c" stroke="#d9221f" stroke-width="2"/><rect x="11.5" y="16" width="16" height="14" fill="#85bde8" stroke="#1b64b4" stroke-width="2"/><rect x="11.5" y="30" width="29" height="15" fill="#ff9a9c" stroke="#d9221f" stroke-width="2"/></svg>
<svg class="s" style="left:1816px;top:212.5px;" width="12" height="8" viewBox="0 0 12 8"><path d="M1.6 1.6 L6.0 6.4 L10.399999999999999 1.6" fill="none" stroke="#2d2d2d" stroke-width="2.6" stroke-linecap="round" stroke-linejoin="round"/></svg>
<div class="t" style="left:1784.5px;top:268.27px;font-size:22.3px;font-family:'Liberation Sans', sans-serif;font-weight:400;color:#111;font-style:normal;transform:translateX(-50%);">Conditional</div>
<div class="t" style="left:1784.5px;top:292.27px;font-size:22.3px;font-family:'Liberation Sans', sans-serif;font-weight:400;color:#111;font-style:normal;transform:translateX(-50%);">Formatting</div>
<svg class="s" style="left:1859px;top:193px;" width="64" height="57" viewBox="0 0 64 57"><rect x="1" y="1" width="55" height="44" fill="#fafafa" stroke="#3a3a3a" stroke-width="2"/><path d="M1 16 H57 M1 30 H57 M19.5 1 V45 M38 1 V45" stroke="#6b6b6b" stroke-width="1.6"/><rect x="19.5" y="16" width="36.5" height="29" fill="#85bde8" stroke="#1b64b4" stroke-width="2"/><path d="M19.5 30 H56 M38 16 V45" stroke="#1b64b4" stroke-width="1.8"/><path d="M31 36 L58 9 C60 7 62 8.5 60.5 10.5 L36 40 Z" fill="#fafafa" stroke="#3a3a3a" stroke-width="1.8" stroke-linejoin="round"/><path d="M14.5 53 C20 52 21.5 48 23.5 44 C26 38.5 33 37 36 41.5 C38.5 46 35.5 52.5 28.5 54.5 C23 56 17.5 55 14.5 53 Z" fill="#85bde8" stroke="#1b64b4" stroke-width="2"/></svg>
<svg class="s" style="left:1930px;top:212.5px;" width="12" height="8" viewBox="0 0 12 8"><path d="M1.6 1.6 L6.0 6.4 L10.399999999999999 1.6" fill="none" stroke="#2d2d2d" stroke-width="2.6" stroke-linecap="round" stroke-linejoin="round"/></svg>
<div class="t" style="left:1899px;top:268.27px;font-size:22.3px;font-family:'Liberation Sans', sans-serif;font-weight:400;color:#111;font-style:normal;transform:translateX(-50%);">Format</div>
<div class="t" style="left:1899px;top:292.27px;font-size:22.3px;font-family:'Liberation Sans', sans-serif;font-weight:400;color:#111;font-style:normal;transform:translateX(-50%);">as Table</div>
<svg class="s" style="left:1959px;top:193px;" width="64" height="57" viewBox="0 0 64 57"><rect x="1" y="1" width="55" height="44" fill="#fafafa" stroke="#3a3a3a" stroke-width="2"/><path d="M1 10.5 H57 M1 33 H57 M11 1 V45 M46 1 V45" stroke="#6b6b6b" stroke-width="1.6"/><rect x="11" y="10.5" width="35" height="22.5" fill="#85bde8" stroke="#1b64b4" stroke-width="2"/><path d="M31 36 L58 9 C60 7 62 8.5 60.5 10.5 L36 40 Z" fill="#fafafa" stroke="#3a3a3a" stroke-width="1.8" stroke-linejoin="round"/><path d="M14.5 53 C20 52 21.5 48 23.5 44 C26 38.5 33 37 36 41.5 C38.5 46 35.5 52.5 28.5 54.5 C23 56 17.5 55 14.5 53 Z" fill="#85bde8" stroke="#1b64b4" stroke-width="2"/></svg>
<svg class="s" style="left:2030px;top:212.5px;" width="12" height="8" viewBox="0 0 12 8"><path d="M1.6 1.6 L6.0 6.4 L10.399999999999999 1.6" fill="none" stroke="#2d2d2d" stroke-width="2.6" stroke-linecap="round" stroke-linejoin="round"/></svg>
<div class="t" style="left:1998.5px;top:268.27px;font-size:22.3px;font-family:'Liberation Sans', sans-serif;font-weight:400;color:#111;font-style:normal;transform:translateX(-50%);">Cell</div>
<div class="t" style="left:1998.5px;top:292.27px;font-size:22.3px;font-family:'Liberation Sans', sans-serif;font-weight:400;color:#111;font-style:normal;transform:translateX(-50%);">Styles</div>
<svg class="s" style="left:2096px;top:186px;" width="32" height="33" viewBox="0 0 32 33"><rect x="1" y="1" width="30" height="26" fill="#fafafa" stroke="#3a3a3a" stroke-width="2"/><path d="M11 1 V27 M21 1 V27" stroke="#6b6b6b" stroke-width="1.5"/><rect x="11.5" y="8" width="19.5" height="12" fill="#85bde8" stroke="#1b64b4" stroke-width="2"/><path d="M21 8 V20" stroke="#1b64b4" stroke-width="1.5"/><rect x="0" y="7" width="11" height="14" fill="#fafafa"/><path d="M14 13.5 H2.5 M8.5 6.5 L2 13.5 L8.5 20.5" fill="none" stroke="#2b8ad8" stroke-width="2"/></svg>
<svg class="s" style="left:2096px;top:230px;" width="32" height="33" viewBox="0 0 32 33"><path d="M1 9 V1 H31 V9 M1 19 V27 H31 V19" fill="#fafafa" stroke="#3a3a3a" stroke-width="2"/><rect x="1" y="1" width="30" height="8" fill="#fafafa"/><rect x="1" y="19" width="30" height="8" fill="#fafafa"/><path d="M1 9 V1 H31 V9 M1 19 V27 H31 V19" fill="none" stroke="#3a3a3a" stroke-width="2"/><path d="M11 1 V9 M21 1 V9 M11 19 V27 M21 19 V27" stroke="#6b6b6b" stroke-width="1.5"/><rect x="6" y="8.5" width="11" height="11" fill="#85bde8" stroke="#1b64b4" stroke-width="2"/><path d="M21.5 9 L30.5 19 M30.5 9 L21.5 19" stroke="#e8262b" stroke-width="1.8"/></svg>
<svg class="s" style="left:2096px;top:271px;" width="32" height="33" viewBox="0 0 32 33"><rect x="1" y="6" width="30" height="26" fill="#fafafa" stroke="#3a3a3a" stroke-width="2"/><rect x="6" y="4" width="20" height="4" fill="#f2f2f2"/><path d="M9 6 V32 M23 6 V32 M1 17 H31 M1 27 H31" stroke="#6b6b6b" stroke-width="1.5"/><rect x="9" y="17" width="14" height="10" fill="#85bde8" stroke="#1b64b4" stroke-width="2"/><path d="M7 3 H25 M7 0 V6 M25 0 V6" stroke="#2b8ad8" stroke-width="1.6"/></svg>
<div class="t" style="left:2141px;top:201.38px;font-size:22px;font-family:'Liberation Sans', sans-serif;font-weight:400;color:#111;font-style:normal;">Insert</div>
<svg class="s" style="left:2212px;top:197px;" width="12" height="8" viewBox="0 0 12 8"><path d="M1.6 1.6 L6.0 6.4 L10.399999999999999 1.6" fill="none" stroke="#2d2d2d" stroke-width="2.6" stroke-linecap="round" stroke-linejoin="round"/></svg>
<div class="t" style="left:2141px;top:244.88px;font-size:22px;font-family:'Liberation Sans', sans-serif;font-weight:400;color:#111;font-style:normal;">Delete</div>
<svg class="s" style="left:2218px;top:241px;" width="12" height="8" viewBox="0 0 12 8"><path d="M1.6 1.6 L6.0 6.4 L10.399999999999999 1.6" fill="none" stroke="#2d2d2d" stroke-width="2.6" stroke-linecap="round" stroke-linejoin="round"/></svg>
<div class="t" style="left:2141px;top:288.38px;font-size:22px;font-family:'Liberation Sans', sans-serif;font-weight:400;color:#111;font-style:normal;">Format</div>
<svg class="s" style="left:2224px;top:285px;" width="12" height="8" viewBox="0 0 12 8"><path d="M1.6 1.6 L6.0 6.4 L10.399999999999999 1.6" fill="none" stroke="#2d2d2d" stroke-width="2.6" stroke-linecap="round" stroke-linejoin="round"/></svg>
<svg class="s" style="left:2292px;top:187px;" width="28" height="28" viewBox="0 0 28 28"><path d="M25.5 6 V1.5 H3 L14 14 L3 26.5 H25.5 V22" fill="none" stroke="#333" stroke-width="2" stroke-linejoin="miter"/></svg>
<svg class="s" style="left:2334px;top:197px;" width="12" height="8" viewBox="0 0 12 8"><path d="M1.6 1.6 L6.0 6.4 L10.399999999999999 1.6" fill="none" stroke="#2d2d2d" stroke-width="2.6" stroke-linecap="round" stroke-linejoin="round"/></svg>
<svg class="s" style="left:2290px;top:230px;" width="33" height="29" viewBox="0 0 33 29"><rect x="1" y="1" width="31" height="27" fill="#fafafa" stroke="#333" stroke-width="2"/><path d="M1 8 H32" stroke="#333" stroke-width="1.6"/><path d="M16.5 11 V23.5 M11.5 18.5 L16.5 23.5 L21.5 18.5" fill="none" stroke="#2b8ad8" stroke-width="2"/></svg>
<svg class="s" style="left:2334px;top:241px;" width="12" height="8" viewBox="0 0 12 8"><path d="M1.6 1.6 L6.0 6.4 L10.399999999999999 1.6" fill="none" stroke="#2d2d2d" stroke-width="2.6" stroke-linecap="round" stroke-linejoin="round"/></svg>
<svg class="s" style="left:2290px;top:272px;" width="32" height="32" viewBox="0 0 32 32"><path d="M2 20 L16 6 L30 20 L16 31 Z" fill="none"/><path d="M16 2.5 L29.5 16 L16.5 29.5 L3 16 Z" fill="#f4f4f4" stroke="#9b2fae" stroke-width="2.2" stroke-linejoin="round"/><path d="M9.5 9.5 L23 23 L16.5 29.5 L3 16 Z" fill="#c58fd1" stroke="#9b2fae" stroke-width="2.2" stroke-linejoin="round"/></svg>
<svg class="s" style="left:2334px;top:285px;" width="12" height="8" viewBox="0 0 12 8"><path d="M1.6 1.6 L6.0 6.4 L10.399999999999999 1.6" fill="none" stroke="#2d2d2d" stroke-width="2.6" stroke-linecap="round" stroke-linejoin="round"/></svg>
<div class="t" style="left:2364px;top:206.26px;font-size:31px;font-family:'Liberation Sans', sans-serif;font-weight:400;color:#2b8ad8;font-style:normal;transform:scaleX(0.9);transform-origin:left">A</div>
<div class="t" style="left:2364px;top:231.95px;font-size:29px;font-family:'Liberation Sans', sans-serif;font-weight:400;color:#333;font-style:normal;transform:scaleX(0.85);transform-origin:left">Z</div>
<svg class="s" style="left:2387px;top:201px;" width="35" height="34" viewBox="0 0 35 34"><path d="M2 2 H32 V6 L20.5 17.5 V32 H14 V17.5 L2 6 Z" fill="#fafafa" stroke="#333" stroke-width="2.2" stroke-linejoin="round"/><path d="M2 6 H32" stroke="#333" stroke-width="1.5"/></svg>
<svg class="s" style="left:2434px;top:212.5px;" width="12" height="8" viewBox="0 0 12 8"><path d="M1.6 1.6 L6.0 6.4 L10.399999999999999 1.6" fill="none" stroke="#2d2d2d" stroke-width="2.6" stroke-linecap="round" stroke-linejoin="round"/></svg>
<div class="t" style="left:2401.5px;top:268.38px;font-size:22px;font-family:'Liberation Sans', sans-serif;font-weight:400;color:#111;font-style:normal;transform:translateX(-50%);">Sort &amp;</div>
<div class="t" style="left:2401.5px;top:292.38px;font-size:22px;font-family:'Liberation Sans', sans-serif;font-weight:400;color:#111;font-style:normal;transform:translateX(-50%);">Filter</div>
<svg class="s" style="left:2461px;top:188px;" width="60" height="59" viewBox="0 0 60 59"><circle cx="36.5" cy="21" r="19.5" fill="#fafafa" stroke="#333" stroke-width="2.4"/><path d="M22.5 35 L1.5 57" stroke="#333" stroke-width="2.4" stroke-linecap="round"/></svg>
<svg class="s" style="left:2535px;top:212.5px;" width="12" height="8" viewBox="0 0 12 8"><path d="M1.6 1.6 L6.0 6.4 L10.399999999999999 1.6" fill="none" stroke="#2d2d2d" stroke-width="2.6" stroke-linecap="round" stroke-linejoin="round"/></svg>
<div class="t" style="left:2502px;top:268.38px;font-size:22px;font-family:'Liberation Sans', sans-serif;font-weight:400;color:#111;font-style:normal;transform:translateX(-50%);">Find &amp;</div>
<div class="t" style="left:2502px;top:292.38px;font-size:22px;font-family:'Liberation Sans', sans-serif;font-weight:400;color:#111;font-style:normal;transform:translateX(-50%);">Select</div>
<svg class="s" style="left:2607px;top:187px;" width="46" height="58" viewBox="0 0 46 58"><path d="M19 1.5 H39.5 L31 22 H43.5 L11 56 L19.5 31.5 H4 Z" fill="#85bde8" stroke="#1b64b4" stroke-width="2.2" stroke-linejoin="round"/></svg>
<div class="t" style="left:2629px;top:268.38px;font-size:22px;font-family:'Liberation Sans', sans-serif;font-weight:400;color:#111;font-style:normal;transform:translateX(-50%);">Ideas</div>
<svg class="s" style="left:2729px;top:187px;" width="60" height="58" viewBox="0 0 60 58"><path d="M1 5 H22 M1 5 V56 H42 V35" fill="none" stroke="#a9cce9" stroke-width="2"/><path d="M10 32 L30 12 L36 18 L16 38 Z" fill="none" stroke="#a9cce9" stroke-width="2"/><path d="M28 6 L36 0.5 L48 12.5 L42 20 Z" fill="#cfe3f3" stroke="#a9cce9" stroke-width="2"/><path d="M14 26 L25 15" stroke="#a9cce9" stroke-width="2"/></svg>
<svg class="s" style="left:2794px;top:212.5px;" width="12" height="8" viewBox="0 0 12 8"><path d="M1.6 1.6 L6.0 6.4 L10.399999999999999 1.6" fill="none" stroke="#aaa" stroke-width="2.6" stroke-linecap="round" stroke-linejoin="round"/></svg>
<div class="t" style="left:2763px;top:268.38px;font-size:22px;font-family:'Liberation Sans', sans-serif;font-weight:400;color:#888;font-style:normal;transform:translateX(-50%);">Sensitivity</div>
<div class="r" style="left:0px;top:320px;width:2880px;height:52px;background:#ffffff"></div>
<div class="r" style="left:0px;top:372px;width:2880px;height:2px;background:#a9a9a9"></div>
<div class="r" style="left:0px;top:374px;width:2880px;height:3px;background:#f4f4f4"></div>
<div class="r" style="left:0px;top:377px;width:2880px;height:2px;background:#b3b3b3"></div>
<div class="r" style="left:0px;top:320px;width:170px;height:52px;background:#fff;border:2px solid #b9b9b9;border-bottom:none;box-sizing:border-box"></div>
<div class="t" style="left:21px;top:349.48px;font-size:24.6px;font-family:'Liberation Sans', sans-serif;font-weight:400;color:#1a1a1a;font-style:normal;">B68</div>
<svg class="s" style="left:145px;top:329px;" width="16" height="34" viewBox="0 0 16 34"><path d="M1 11 L8 0.5 L15 11 Z M1 23 L8 33.5 L15 23 Z" fill="#666"/></svg>
<svg class="s" style="left:199px;top:335px;" width="24" height="24" viewBox="0 0 24 24"><path d="M2.5 2.5 L21.5 21.5 M21.5 2.5 L2.5 21.5" stroke="#cdcdcd" stroke-width="4.2" stroke-linecap="round"/></svg>
<svg class="s" style="left:255px;top:335px;" width="31" height="24" viewBox="0 0 31 24"><path d="M2.5 12 L11 20.5 L28.5 3" fill="none" stroke="#d0d0d0" stroke-width="4.4" stroke-linecap="round" stroke-linejoin="round"/></svg>
<div class="t" style="left:315px;top:343.86px;font-size:33px;font-family:'Liberation Serif', serif;font-weight:400;color:#333;font-style:normal;-webkit-text-stroke:0.8px #333"><i>f</i><i style="font-size:30px">x</i></div>
<div class="r" style="left:360px;top:332px;width:2px;height:30px;background:#dcdcdc"></div>
<div class="r" style="left:376px;top:326px;width:2480px;height:40px;background:#fcfcfc"></div>
<div class="t" style="left:376px;top:347.49px;font-size:26px;font-family:'Liberation Sans', sans-serif;font-weight:400;color:#111;font-style:normal;transform:scaleX(0.94);transform-origin:left">=J66/9</div>
<svg class="s" style="left:2857px;top:341px;" width="15" height="11" viewBox="0 0 15 11"><path d="M0.5 0.5 H14.5 L7.5 10.5 Z" fill="#666"/></svg>
<div class="r" style="left:0px;top:379px;width:2880px;height:89px;background:linear-gradient(#fcfcfc,#f6f6f6)"></div>
<div class="r" style="left:359px;top:379px;width:332px;height:89px;background:#f1f1f1"></div>
<div class="r" style="left:0px;top:468px;width:2880px;height:2px;background:#bababa"></div>
<div class="r" style="left:0px;top:470px;width:2880px;height:4px;background:#fefefe"></div>
<svg class="s" style="left:13px;top:386px;" width="78" height="78" viewBox="0 0 78 78"><path d="M0.5 77.5 L77.5 0.5 V77.5 Z" fill="#dcdcdc"/></svg>
<div class="r" style="left:94px;top:379px;width:2px;height:1213px;background:#b9b9b9"></div>
<div class="r" style="left:690px;top:379px;width:1.5px;height:89px;background:#e2e2e2"></div>
<div class="r" style="left:964px;top:379px;width:1.5px;height:89px;background:#e2e2e2"></div>
<div class="r" style="left:1238px;top:379px;width:1.5px;height:89px;background:#e2e2e2"></div>
<div class="r" style="left:1512px;top:379px;width:1.5px;height:89px;background:#e2e2e2"></div>
<div class="r" style="left:1786px;top:379px;width:1.5px;height:89px;background:#e2e2e2"></div>
<div class="r" style="left:2060px;top:379px;width:1.5px;height:89px;background:#e2e2e2"></div>
<div class="r" style="left:2334px;top:379px;width:1.5px;height:89px;background:#e2e2e2"></div>
<div class="r" style="left:2608px;top:379px;width:1.5px;height:89px;background:#e2e2e2"></div>
<div class="r" style="left:358px;top:379px;width:1.5px;height:89px;background:#dedede"></div>
<div class="r" style="left:359px;top:465px;width:332px;height:4px;background:#217346"></div>
<div class="t" style="left:222.4px;top:424.93px;font-size:43.5px;font-family:'Liberation Sans', sans-serif;font-weight:400;color:#5e5e5e;font-style:normal;transform:translateX(-50%);-webkit-text-stroke:0.7px #5e5e5e">A</div>
<div class="t" style="left:525px;top:424.93px;font-size:43.5px;font-family:'Liberation Sans', sans-serif;font-weight:400;color:#217346;font-style:normal;transform:translateX(-50%);-webkit-text-stroke:0.7px #217346">B</div>
<div class="t" style="left:828.5px;top:424.93px;font-size:43.5px;font-family:'Liberation Sans', sans-serif;font-weight:400;color:#5e5e5e;font-style:normal;transform:translateX(-50%);-webkit-text-stroke:0.7px #5e5e5e">C</div>
<div class="t" style="left:1102.5px;top:424.93px;font-size:43.5px;font-family:'Liberation Sans', sans-serif;font-weight:400;color:#5e5e5e;font-style:normal;transform:translateX(-50%);-webkit-text-stroke:0.7px #5e5e5e">D</div>
<div class="t" style="left:1376.4px;top:424.93px;font-size:43.5px;font-family:'Liberation Sans', sans-serif;font-weight:400;color:#5e5e5e;font-style:normal;transform:translateX(-50%);-webkit-text-stroke:0.7px #5e5e5e">E</div>
<div class="t" style="left:1651px;top:424.93px;font-size:43.5px;font-family:'Liberation Sans', sans-serif;font-weight:400;color:#5e5e5e;font-style:normal;transform:translateX(-50%);-webkit-text-stroke:0.7px #5e5e5e">F</div>
<div class="t" style="left:1923.5px;top:424.93px;font-size:43.5px;font-family:'Liberation Sans', sans-serif;font-weight:400;color:#5e5e5e;font-style:normal;transform:translateX(-50%);-webkit-text-stroke:0.7px #5e5e5e">G</div>
<div class="t" style="left:2197px;top:424.93px;font-size:43.5px;font-family:'Liberation Sans', sans-serif;font-weight:400;color:#5e5e5e;font-style:normal;transform:translateX(-50%);-webkit-text-stroke:0.7px #5e5e5e">H</div>
<div class="t" style="left:2472px;top:424.93px;font-size:43.5px;font-family:'Liberation Sans', sans-serif;font-weight:400;color:#5e5e5e;font-style:normal;transform:translateX(-50%);-webkit-text-stroke:0.7px #5e5e5e">I</div>
<div class="t" style="left:2744px;top:424.93px;font-size:43.5px;font-family:'Liberation Sans', sans-serif;font-weight:400;color:#5e5e5e;font-style:normal;transform:translateX(-50%);-webkit-text-stroke:0.7px #5e5e5e">J</div>
<div class="r" style="left:96px;top:474px;width:2784px;height:1118px;background:#ffffff"></div>
<div class="r" style="left:0px;top:474px;width:94px;height:1118px;background:linear-gradient(90deg,#fdfdfd,#f4f4f4)"></div>
<div class="r" style="left:0px;top:474px;width:94px;height:2px;background:linear-gradient(90deg,#f2f2f2,#dedede)"></div>
<div class="r" style="left:96px;top:474px;width:2784px;height:2px;background:#d2d2d2"></div>
<div class="r" style="left:0px;top:542px;width:94px;height:2px;background:linear-gradient(90deg,#f2f2f2,#dedede)"></div>
<div class="r" style="left:2334px;top:542px;width:546px;height:2px;background:#d2d2d2"></div>
<div class="r" style="left:0px;top:610px;width:94px;height:2px;background:linear-gradient(90deg,#f2f2f2,#dedede)"></div>
<div class="r" style="left:96px;top:610px;width:2784px;height:2px;background:#d2d2d2"></div>
<div class="r" style="left:0px;top:678px;width:94px;height:2px;background:linear-gradient(90deg,#f2f2f2,#dedede)"></div>
<div class="r" style="left:96px;top:678px;width:2784px;height:2px;background:#d2d2d2"></div>
<div class="r" style="left:0px;top:746px;width:94px;height:2px;background:linear-gradient(90deg,#f2f2f2,#dedede)"></div>
<div class="r" style="left:96px;top:746px;width:2784px;height:2px;background:#d2d2d2"></div>
<div class="r" style="left:0px;top:814px;width:94px;height:2px;background:linear-gradient(90deg,#f2f2f2,#dedede)"></div>
<div class="r" style="left:96px;top:814px;width:2784px;height:2px;background:#d2d2d2"></div>
<div class="r" style="left:0px;top:882px;width:94px;height:2px;background:linear-gradient(90deg,#f2f2f2,#dedede)"></div>
<div class="r" style="left:96px;top:882px;width:2784px;height:2px;background:#d2d2d2"></div>
<div class="r" style="left:0px;top:950px;width:94px;height:2px;background:linear-gradient(90deg,#f2f2f2,#dedede)"></div>
<div class="r" style="left:96px;top:950px;width:2784px;height:2px;background:#d2d2d2"></div>
<div class="r" style="left:0px;top:1018px;width:94px;height:2px;background:linear-gradient(90deg,#f2f2f2,#dedede)"></div>
<div class="r" style="left:96px;top:1018px;width:2784px;height:2px;background:#d2d2d2"></div>
<div class="r" style="left:0px;top:1086px;width:94px;height:2px;background:linear-gradient(90deg,#f2f2f2,#dedede)"></div>
<div class="r" style="left:96px;top:1086px;width:2784px;height:2px;background:#d2d2d2"></div>
<div class="r" style="left:0px;top:1154px;width:94px;height:2px;background:linear-gradient(90deg,#f2f2f2,#dedede)"></div>
<div class="r" style="left:96px;top:1154px;width:2784px;height:2px;background:#d2d2d2"></div>
<div class="r" style="left:0px;top:1222px;width:94px;height:2px;background:linear-gradient(90deg,#f2f2f2,#dedede)"></div>
<div class="r" style="left:96px;top:1222px;width:2784px;height:2px;background:#d2d2d2"></div>
<div class="r" style="left:0px;top:1290px;width:94px;height:2px;background:linear-gradient(90deg,#f2f2f2,#dedede)"></div>
<div class="r" style="left:96px;top:1290px;width:2784px;height:2px;background:#d2d2d2"></div>
<div class="r" style="left:0px;top:1358px;width:94px;height:2px;background:linear-gradient(90deg,#f2f2f2,#dedede)"></div>
<div class="r" style="left:96px;top:1358px;width:2784px;height:2px;background:#d2d2d2"></div>
<div class="r" style="left:0px;top:1426px;width:94px;height:2px;background:linear-gradient(90deg,#f2f2f2,#dedede)"></div>
<div class="r" style="left:96px;top:1426px;width:2784px;height:2px;background:#d2d2d2"></div>
<div class="r" style="left:0px;top:1494px;width:94px;height:2px;background:linear-gradient(90deg,#f2f2f2,#dedede)"></div>
<div class="r" style="left:96px;top:1494px;width:2784px;height:2px;background:#d2d2d2"></div>
<div class="r" style="left:0px;top:1562px;width:94px;height:2px;background:linear-gradient(90deg,#f2f2f2,#dedede)"></div>
<div class="r" style="left:96px;top:1562px;width:2784px;height:2px;background:#d2d2d2"></div>
<div class="r" style="left:2334px;top:474px;width:2px;height:1158px;background:#d2d2d2"></div>
<div class="r" style="left:2608px;top:474px;width:2px;height:1158px;background:#d2d2d2"></div>
<div class="r" style="left:358px;top:610px;width:2px;height:70px;background:#d2d2d2"></div>
<div class="r" style="left:358px;top:746px;width:2px;height:818px;background:#d2d2d2"></div>
<div class="r" style="left:690px;top:610px;width:2px;height:70px;background:#d2d2d2"></div>
<div class="r" style="left:690px;top:746px;width:2px;height:818px;background:#d2d2d2"></div>
<div class="r" style="left:964px;top:610px;width:2px;height:70px;background:#d2d2d2"></div>
<div class="r" style="left:964px;top:746px;width:2px;height:818px;background:#d2d2d2"></div>
<div class="r" style="left:1238px;top:610px;width:2px;height:70px;background:#d2d2d2"></div>
<div class="r" style="left:1238px;top:746px;width:2px;height:818px;background:#d2d2d2"></div>
<div class="r" style="left:1512px;top:610px;width:2px;height:70px;background:#d2d2d2"></div>
<div class="r" style="left:1512px;top:746px;width:2px;height:818px;background:#d2d2d2"></div>
<div class="r" style="left:1786px;top:610px;width:2px;height:70px;background:#d2d2d2"></div>
<div class="r" style="left:1786px;top:746px;width:2px;height:818px;background:#d2d2d2"></div>
<div class="r" style="left:2060px;top:610px;width:2px;height:70px;background:#d2d2d2"></div>
<div class="r" style="left:2060px;top:746px;width:2px;height:818px;background:#d2d2d2"></div>
<div class="r" style="left:1238px;top:678px;width:2px;height:70px;background:#d2d2d2"></div>
<div class="r" style="left:964px;top:884px;width:2px;height:66px;background:#fff"></div>
<div class="t" style="left:47.5px;top:512.93px;font-size:43.5px;font-family:'Liberation Sans', sans-serif;font-weight:400;color:#616161;font-style:normal;transform:translateX(-50%);-webkit-text-stroke:0.9px #616161">49</div>
<div class="t" style="left:47.5px;top:580.93px;font-size:43.5px;font-family:'Liberation Sans', sans-serif;font-weight:400;color:#616161;font-style:normal;transform:translateX(-50%);-webkit-text-stroke:0.9px #616161">50</div>
<div class="t" style="left:47.5px;top:648.93px;font-size:43.5px;font-family:'Liberation Sans', sans-serif;font-weight:400;color:#616161;font-style:normal;transform:translateX(-50%);-webkit-text-stroke:0.9px #616161">51</div>
<div class="t" style="left:47.5px;top:716.93px;font-size:43.5px;font-family:'Liberation Sans', sans-serif;font-weight:400;color:#616161;font-style:normal;transform:translateX(-50%);-webkit-text-stroke:0.9px #616161">52</div>
<div class="t" style="left:47.5px;top:784.93px;font-size:43.5px;font-family:'Liberation Sans', sans-serif;font-weight:400;color:#616161;font-style:normal;transform:translateX(-50%);-webkit-text-stroke:0.9px #616161">53</div>
<div class="t" style="left:47.5px;top:852.93px;font-size:43.5px;font-family:'Liberation Sans', sans-serif;font-weight:400;color:#616161;font-style:normal;transform:translateX(-50%);-webkit-text-stroke:0.9px #616161">54</div>
<div class="t" style="left:47.5px;top:920.93px;font-size:43.5px;font-family:'Liberation Sans', sans-serif;font-weight:400;color:#616161;font-style:normal;transform:translateX(-50%);-webkit-text-stroke:0.9px #616161">55</div>
<div class="t" style="left:47.5px;top:988.93px;font-size:43.5px;font-family:'Liberation Sans', sans-serif;font-weight:400;color:#616161;font-style:normal;transform:translateX(-50%);-webkit-text-stroke:0.9px #616161">56</div>
<div class="t" style="left:47.5px;top:1056.93px;font-size:43.5px;font-family:'Liberation Sans', sans-serif;font-weight:400;color:#616161;font-style:normal;transform:translateX(-50%);-webkit-text-stroke:0.9px #616161">57</div>
<div class="t" style="left:47.5px;top:1124.93px;font-size:43.5px;font-family:'Liberation Sans', sans-serif;font-weight:400;color:#616161;font-style:normal;transform:translateX(-50%);-webkit-text-stroke:0.9px #616161">58</div>
<div class="t" style="left:47.5px;top:1192.93px;font-size:43.5px;font-family:'Liberation Sans', sans-serif;font-weight:400;color:#616161;font-style:normal;transform:translateX(-50%);-webkit-text-stroke:0.9px #616161">59</div>
<div class="t" style="left:47.5px;top:1260.93px;font-size:43.5px;font-family:'Liberation Sans', sans-serif;font-weight:400;color:#616161;font-style:normal;transform:translateX(-50%);-webkit-text-stroke:0.9px #616161">60</div>
<div class="t" style="left:47.5px;top:1328.93px;font-size:43.5px;font-family:'Liberation Sans', sans-serif;font-weight:400;color:#616161;font-style:normal;transform:translateX(-50%);-webkit-text-stroke:0.9px #616161">61</div>
<div class="t" style="left:47.5px;top:1396.93px;font-size:43.5px;font-family:'Liberation Sans', sans-serif;font-weight:400;color:#616161;font-style:normal;transform:translateX(-50%);-webkit-text-stroke:0.9px #616161">62</div>
<div class="t" style="left:47.5px;top:1464.93px;font-size:43.5px;font-family:'Liberation Sans', sans-serif;font-weight:400;color:#616161;font-style:normal;transform:translateX(-50%);-webkit-text-stroke:0.9px #616161">63</div>
<div class="t" style="left:47.5px;top:1532.93px;font-size:43.5px;font-family:'Liberation Sans', sans-serif;font-weight:400;color:#616161;font-style:normal;transform:translateX(-50%);-webkit-text-stroke:0.9px #616161">64</div>
<div class="t" style="left:47.5px;top:1600.93px;font-size:43.5px;font-family:'Liberation Sans', sans-serif;font-weight:400;color:#616161;font-style:normal;transform:translateX(-50%);-webkit-text-stroke:0.9px #616161">65</div>
<div class="t" style="left:96px;top:509.86px;font-size:50.8px;font-family:'Liberation Serif', serif;font-weight:400;color:#000;font-style:italic;-webkit-text-stroke:0.45px #000">6.  (2 points) Use the bar graph on population growth of a country shown to the right.  Estimate the</div>
<div class="t" style="left:95px;top:577.86px;font-size:50.8px;font-family:'Liberation Serif', serif;font-weight:400;color:#000;font-style:italic;-webkit-text-stroke:0.45px #000">population of the country in 2080.</div>
<div class="t" style="left:95px;top:713.86px;font-size:50.8px;font-family:'Liberation Serif', serif;font-weight:400;color:#000;font-style:italic;-webkit-text-stroke:0.45px #000">The population of the country in 2080 is about:</div>
<div class="r" style="left:690px;top:813px;width:276px;height:71px;background:#ffff33;border:2.5px solid #111;box-sizing:border-box"></div>
<div class="t" style="left:975px;top:850.86px;font-size:50.8px;font-family:'Liberation Serif', serif;font-weight:400;color:#000;font-style:normal;-webkit-text-stroke:0.45px #000">billion</div>
<div class="t" style="left:703px;top:918.09px;font-size:50.1px;font-family:'Liberation Serif', serif;font-weight:400;color:#000;font-style:italic;-webkit-text-stroke:0.45px #000">(Simplify your answer)</div>
<div class="t" style="left:96px;top:1600.86px;font-size:50.8px;font-family:'Liberation Serif', serif;font-weight:400;color:#000;font-style:italic;-webkit-text-stroke:0.45px #000">7. (1 point) A quality control expert studied the types of defects found in products and recorded the following</div>
<div style="position:absolute;left:0;top:0;width:2880px;height:1800px;filter:blur(1.1px)">
<div class="r" style="left:1241px;top:665px;width:986px;height:808px;background:#fff"></div>
<div class="r" style="left:1419px;top:785px;width:5px;height:583px;background:#222"></div>
<div class="r" style="left:1419px;top:1361px;width:730px;height:5px;background:#3a3a3a"></div>
<div class="r" style="left:1421px;top:791px;width:162px;height:101px;background:#0000ff;border:4px solid #1a1a1a;box-sizing:border-box"></div>
<div class="t" style="left:1407.5px;top:842.50px;font-size:50.5px;font-family:'Liberation Sans', sans-serif;font-weight:400;color:#353535;font-style:normal;transform:translateX(-100%);-webkit-text-stroke:0.8px #353535">2010</div>
<div class="t" style="left:1589px;top:842.94px;font-size:55px;font-family:'Liberation Serif', serif;font-weight:400;color:#111;font-style:normal;-webkit-text-stroke:0.6px #111">6.3</div>
<div class="r" style="left:1421px;top:912px;width:478px;height:95px;background:#ff0000;border:4px solid #1a1a1a;box-sizing:border-box"></div>
<div class="t" style="left:1407.5px;top:960.50px;font-size:50.5px;font-family:'Liberation Sans', sans-serif;font-weight:400;color:#353535;font-style:normal;transform:translateX(-100%);-webkit-text-stroke:0.8px #353535">2030</div>
<div class="t" style="left:1905px;top:960.94px;font-size:55px;font-family:'Liberation Serif', serif;font-weight:400;color:#111;font-style:normal;-webkit-text-stroke:0.6px #111">8.9</div>
<div class="r" style="left:1421px;top:1028px;width:524px;height:95px;background:#11ff3a;border:4px solid #1a1a1a;box-sizing:border-box"></div>
<div class="t" style="left:1407.5px;top:1076.50px;font-size:50.5px;font-family:'Liberation Sans', sans-serif;font-weight:400;color:#353535;font-style:normal;transform:translateX(-100%);-webkit-text-stroke:0.8px #353535">2050</div>
<div class="t" style="left:1951px;top:1076.94px;font-size:55px;font-family:'Liberation Serif', serif;font-weight:400;color:#111;font-style:normal;-webkit-text-stroke:0.6px #111">9.3</div>
<div class="r" style="left:1421px;top:1143px;width:584px;height:96px;background:#ffff33;border:4px solid #1a1a1a;box-sizing:border-box"></div>
<div class="t" style="left:1407.5px;top:1192.00px;font-size:50.5px;font-family:'Liberation Sans', sans-serif;font-weight:400;color:#353535;font-style:normal;transform:translateX(-100%);-webkit-text-stroke:0.8px #353535">2070</div>
<div class="t" style="left:2011px;top:1192.44px;font-size:55px;font-family:'Liberation Serif', serif;font-weight:400;color:#111;font-style:normal;-webkit-text-stroke:0.6px #111">9.8</div>
<div class="r" style="left:1421px;top:1260px;width:612px;height:95px;background:#800080;border:4px solid #1a1a1a;box-sizing:border-box"></div>
<div class="t" style="left:1407.5px;top:1308.50px;font-size:50.5px;font-family:'Liberation Sans', sans-serif;font-weight:400;color:#353535;font-style:normal;transform:translateX(-100%);-webkit-text-stroke:0.8px #353535">2090</div>
<div class="t" style="left:2039px;top:1308.94px;font-size:55px;font-family:'Liberation Serif', serif;font-weight:400;color:#111;font-style:normal;-webkit-text-stroke:0.6px #111">10.0</div>
<div class="t" style="left:1537.5px;top:1389.54px;font-size:50.4px;font-family:'Liberation Sans', sans-serif;font-weight:400;color:#353535;font-style:normal;-webkit-text-stroke:0.8px #353535">Population (in billions)</div>
</div>
<div class="r" style="left:0px;top:1592px;width:2880px;height:53px;background:#ececec"></div>
<div class="r" style="left:0px;top:1592px;width:2880px;height:1.5px;background:#c9c9c9"></div>
<svg class="s" style="left:29px;top:1608px;" width="17" height="21" viewBox="0 0 17 21"><path d="M16 0.5 V20.5 L0.5 10.5 Z" fill="#b5b5b5"/></svg>
<svg class="s" style="left:74px;top:1608px;" width="17" height="21" viewBox="0 0 17 21"><path d="M1 0.5 V20.5 L16.5 10.5 Z" fill="#b5b5b5"/></svg>
<div class="r" style="left:122px;top:1590px;width:157px;height:47px;background:#fbfbfb;border:1.5px solid #cfcfcf;border-top:none;border-radius:0 0 6px 6px;box-sizing:border-box;box-shadow:0 1px 1px rgba(0,0,0,.08)"></div>
<div class="t" style="left:160px;top:1616.79px;font-size:23.7px;font-family:'Liberation Sans', sans-serif;font-weight:700;color:#23834f;font-style:normal;">Sheet1</div>
<svg class="s" style="left:307px;top:1604px;" width="23" height="23" viewBox="0 0 23 23"><path d="M11.5 1 V22 M1 11.5 H22" stroke="#444" stroke-width="3"/></svg>
<div class="r" style="left:354px;top:1596px;width:1.5px;height:40px;background:#d0d0d0"></div>
<div class="r" style="left:0px;top:1644px;width:2880px;height:2px;background:#a9a9a9"></div>
<div class="r" style="left:0px;top:1646px;width:2880px;height:43px;background:linear-gradient(#e6e6e6,#d6d6d6);border-radius:0 0 12px 12px"></div>
<div class="r" style="left:2240px;top:1646px;width:74px;height:42px;background:#acacac"></div>
<svg class="s" style="left:2264px;top:1654px;" width="27" height="27" viewBox="0 0 27 27"><rect x="1" y="1" width="25" height="25" fill="none" stroke="#f4f4f4" stroke-width="2"/><path d="M1 9.3 H26 M1 17.6 H26 M9.3 1 V26 M17.6 1 V26" stroke="#f4f4f4" stroke-width="1.8"/></svg>
<svg class="s" style="left:2335px;top:1654px;" width="28" height="27" viewBox="0 0 28 27"><rect x="1" y="1" width="26" height="25" fill="none" stroke="#666" stroke-width="2"/><rect x="6" y="6" width="16" height="15" fill="none" stroke="#666" stroke-width="1.6"/><path d="M9 10 H19 M9 13.5 H19 M9 17 H19" stroke="#666" stroke-width="1.4"/></svg>
<svg class="s" style="left:2406px;top:1654px;" width="28" height="27" viewBox="0 0 28 27"><path d="M1 1 H27 V26 H1 Z M8 1 V13 H20 V1 M1 26" fill="none" stroke="#666" stroke-width="2"/></svg>
<div class="r" style="left:2472px;top:1666px;width:16px;height:2.5px;background:#555"></div>
<div class="r" style="left:2504px;top:1664px;width:196px;height:8px;background:#a9a9a9;border-radius:4px"></div>
<div class="r" style="left:2598px;top:1665px;width:7px;height:6px;background:#eee;border-radius:50%"></div>
<div class="r" style="left:2622px;top:1656px;width:23px;height:23px;background:linear-gradient(#fff,#f0f0f0);border-radius:50%;box-shadow:0 0.5px 2px rgba(0,0,0,.45)"></div>
<svg class="s" style="left:2713px;top:1657px;" width="21" height="21" viewBox="0 0 21 21"><path d="M10.5 1 V20 M1 10.5 H20" stroke="#555" stroke-width="2.6"/></svg>
<div class="t" style="left:2770px;top:1668.51px;font-size:24.5px;font-family:'Liberation Sans', sans-serif;font-weight:400;color:#3a3a3a;font-style:normal;">210%</div>
<div class="r" style="left:0px;top:1689px;width:2880px;height:111px;background:linear-gradient(90deg,#d9ba78 0,#dcbd7c 1500px,#d6b77a 2150px,#7c7b76 2400px,#5b5d5c 2600px,#575958 2880px)"></div>
<div class="r" style="left:0px;top:1689px;width:2880px;height:8px;background:linear-gradient(rgba(0,0,0,.12),rgba(0,0,0,0))"></div>
<div class="r" style="left:76px;top:1688px;width:2728px;height:120px;border-radius:14px;background:linear-gradient(90deg,#e0bc72 0,#e3c27f 1300px,#e8c98b 2050px,#cfb78c 2200px,#9c978b 2330px,#8d8f8a 2450px,#8e908b 2728px)"></div>
<svg class="s" style="left:92px;top:1706px;" width="74" height="70" viewBox="0 0 74 70"><defs><linearGradient id="fg1" x1="0" y1="0" x2="0" y2="1"><stop offset="0" stop-color="#1ed0fb"/><stop offset="1" stop-color="#1a74e8"/></linearGradient></defs><rect x="0" y="0" width="74" height="70" rx="6" fill="#e9eef3"/><path d="M6 0 H38 C32 14 30 26 30 40 H37 C37 52 40 62 44 70 H6 A6 6 0 0 1 0 64 V6 A6 6 0 0 1 6 0 Z" fill="url(#fg1)"/><path d="M19 18 V26 M54 18 V26" stroke="#1c2a3a" stroke-width="3" stroke-linecap="round"/><path d="M13 44 C25 56 50 56 62 44" fill="none" stroke="#1c2a3a" stroke-width="3" stroke-linecap="round"/></svg>
<div class="r" style="left:123.5px;top:1787px;width:9px;height:9px;border-radius:50%;background:#4a3410"></div>
<svg class="s" style="left:184px;top:1702px;" width="78" height="78" viewBox="0 0 78 78"><defs><radialGradient id="sg" cx=".45" cy=".55" r=".6"><stop offset="0" stop-color="#3a8fd8"/><stop offset=".5" stop-color="#2a3e9a"/><stop offset="1" stop-color="#140f3c"/></radialGradient><filter id="sbl" x="-20%" y="-20%" width="140%" height="140%"><feGaussianBlur stdDeviation="3"/></filter><radialGradient id="sgl" cx=".5" cy=".5" r=".5"><stop offset="0" stop-color="#fff"/><stop offset=".3" stop-color="#9ff3ff" stop-opacity=".8"/><stop offset="1" stop-color="#5ff" stop-opacity="0"/></radialGradient></defs><circle cx="39" cy="39" r="38.5" fill="#f0f0f0"/><circle cx="39" cy="39" r="36" fill="url(#sg)"/><g filter="url(#sbl)"><ellipse cx="42" cy="22" rx="22" ry="12" fill="#d23c9c" opacity=".8"/><ellipse cx="60" cy="50" rx="10" ry="6" fill="#2fbf8f" opacity=".8"/><ellipse cx="28" cy="50" rx="14" ry="8" fill="#2aa0e0" opacity=".6"/></g><path d="M14 36 C26 28 40 30 50 40" fill="none" stroke="#c9a0f0" stroke-width="4" opacity=".5"/><path d="M12 52 C26 44 42 34 68 36" fill="none" stroke="#7ff0ff" stroke-width="3" opacity=".8"/><path d="M44 12 C40 28 38 50 52 70" fill="none" stroke="#f060d0" stroke-width="3" opacity=".8"/><circle cx="38" cy="39" r="14" fill="url(#sgl)"/></svg>
<svg class="s" style="left:279px;top:1702px;" width="78" height="78" viewBox="0 0 78 78"><defs><linearGradient id="lg" x1="0" y1="0" x2="0" y2="1"><stop offset="0" stop-color="#d7dde0"/><stop offset="1" stop-color="#8d9497"/></linearGradient></defs><circle cx="39" cy="39" r="38" fill="#f3f3f3"/><circle cx="39" cy="39" r="35" fill="url(#lg)"/><path d="M62 15 C50 15 38 22 28 38 L20 38 L12 48 L24 48 L30 54 L30 66 L40 58 L40 50 C56 40 62 28 62 15 Z" fill="#3d4245"/><circle cx="47" cy="31" r="4.5" fill="#c8ced1"/></svg>
<svg class="s" style="left:372px;top:1697px;" width="84" height="88" viewBox="0 0 84 88"><defs><linearGradient id="skyg" x1="0" y1="0" x2="0" y2="1"><stop offset="0" stop-color="#2a7ce0"/><stop offset=".6" stop-color="#5aa3ea"/><stop offset="1" stop-color="#b7daf4"/></linearGradient></defs><g transform="rotate(-7 42 44)"><rect x="8" y="6" width="64" height="76" fill="#fff" stroke="#eee" stroke-width="3" stroke-dasharray="3 2"/><rect x="13" y="11" width="54" height="66" fill="url(#skyg)"/><path d="M20 18 C24 26 30 36 36 44 L40 48 L30 62 L38 58 L46 52 C54 56 60 62 66 64 C60 56 54 50 48 46 L44 42 C38 34 30 24 20 18 Z" fill="#b88a55"/><path d="M20 18 C26 24 32 32 38 42" fill="none" stroke="#f4f4f4" stroke-width="3.5" stroke-linecap="round"/><path d="M48 48 C54 52 60 58 66 64" fill="none" stroke="#e8e0d0" stroke-width="2.5"/><ellipse cx="42" cy="48" rx="5" ry="4" fill="#d8b07a"/></g><circle cx="62" cy="66" r="18" fill="none" stroke="#7b7b7b" stroke-width="2" opacity=".6"/><circle cx="62" cy="66" r="11" fill="none" stroke="#7b7b7b" stroke-width="1.5" opacity=".6"/><circle cx="62" cy="66" r="5" fill="#3f5f9f" opacity=".7"/></svg>
<svg class="s" style="left:467px;top:1702px;" width="78" height="78" viewBox="0 0 78 78"><defs><linearGradient id="saf" x1="0" y1="0" x2="0" y2="1"><stop offset="0" stop-color="#1bc1fa"/><stop offset="1" stop-color="#1e5fe0"/></linearGradient></defs><circle cx="39" cy="39" r="38" fill="#f4f4f4"/><circle cx="39" cy="39" r="34" fill="url(#saf)"/><circle cx="39" cy="39" r="29" fill="none" stroke="#fff" stroke-width="4" stroke-dasharray="1.2 3.3" opacity=".9"/><path d="M62 16 L43 43 L35 35 Z" fill="#f0373a"/><path d="M16 62 L35 35 L43 43 Z" fill="#f1f1f1"/></svg>
<div class="r" style="left:501.0px;top:1787px;width:9px;height:9px;border-radius:50%;background:#4a3410"></div>
<svg class="s" style="left:562px;top:1698px;" width="74" height="86" viewBox="0 0 74 86"><rect x="0" y="2" width="62" height="80" rx="5" fill="#b78848" transform="rotate(-4 31 42)"/><rect x="62" y="12" width="6" height="12" fill="#e6e6e6"/><rect x="62" y="26" width="6" height="12" fill="#5bc8f0"/><rect x="62" y="40" width="6" height="12" fill="#6bd06a"/><rect x="62" y="54" width="6" height="12" fill="#f2c14a"/><circle cx="33" cy="40" r="19" fill="none" stroke="#a37436" stroke-width="3"/><circle cx="28" cy="34" r="6" fill="#a37436"/><circle cx="38" cy="34" r="6" fill="#a37436"/><path d="M18 52 C20 44 26 42 28 42 C32 42 36 44 38 52 Z" fill="#a37436"/></svg>
<svg class="s" style="left:653px;top:1701px;" width="78" height="80" viewBox="0 0 78 80"><g transform="rotate(-4 39 40)"><rect x="6" y="6" width="66" height="70" rx="4" fill="#6d7880"/><rect x="4" y="2" width="66" height="70" rx="4" fill="#fff"/><path d="M4 6 A4 4 0 0 1 8 2 H66 A4 4 0 0 1 70 6 V20 H4 Z" fill="#ea4f47"/><text x="37" y="16.5" font-family="Liberation Sans" font-size="13" fill="#fff" text-anchor="middle">DEC</text><text x="37" y="60" font-family="Liberation Sans" font-size="40" fill="#222" text-anchor="middle">4</text></g></svg>
<svg class="s" style="left:747px;top:1702px;" width="78" height="78" viewBox="0 0 78 78"><defs><linearGradient id="asg" x1="0" y1="0" x2="0" y2="1"><stop offset="0" stop-color="#18bffb"/><stop offset="1" stop-color="#1d6ae6"/></linearGradient></defs><circle cx="39" cy="39" r="38" fill="#eeeeee"/><circle cx="39" cy="39" r="35" fill="url(#asg)"/><path d="M39 22 L23 52 M39 22 L55 52 M16 44 H62" stroke="#fff" stroke-width="5" stroke-linecap="round"/></svg>
<div class="r" style="left:798px;top:1696px;width:34px;height:34px;border-radius:50%;background:#f0413a;box-shadow:0 1px 2px rgba(0,0,0,.25)"></div>
<div class="t" style="left:815px;top:1713.53px;font-size:23px;font-family:'Liberation Sans', sans-serif;font-weight:400;color:#fff;font-style:normal;transform:translateX(-50%);">2</div>
<svg class="s" style="left:846px;top:1700px;" width="70" height="80" viewBox="0 0 70 80"><g transform="rotate(-6 35 40)"><rect x="8" y="4" width="56" height="72" rx="5" fill="#222"/><rect x="6" y="2" width="56" height="70" rx="5" fill="#fafafa"/><circle cx="17" cy="17" r="4.5" fill="#f98a1e"/><circle cx="17" cy="31" r="4.5" fill="#1ba5f5"/><circle cx="17" cy="45" r="4.5" fill="#4dcb46"/><circle cx="17" cy="59" r="4.5" fill="#c765e3"/><path d="M26 14 H56 M26 28 H56 M26 42 H56 M26 56 H56" stroke="#ddd" stroke-width="1.2"/></g></svg>
<svg class="s" style="left:934px;top:1703px;" width="84" height="78" viewBox="0 0 84 78"><g transform="rotate(-6 40 38)"><rect x="4" y="6" width="66" height="66" fill="#f5f2ea"/><path d="M30 6 H70 V40 C52 38 38 26 30 6 Z" fill="#9ed97c"/><path d="M4 28 L70 52 V60 L4 38 Z" fill="#f6cb45"/><rect x="18" y="6" width="8" height="66" fill="#3f8ee6"/><path d="M4 50 H14 V72 H4 Z" fill="#f7b9c4"/></g><circle cx="24" cy="48" r="10" fill="#1f72d8"/><path d="M24 40 L29 54 L24 51 L19 54 Z" fill="#fff"/><circle cx="61" cy="57" r="18" fill="#f2f2f2" stroke="#ddd"/><circle cx="61" cy="57" r="11" fill="none" stroke="#4a5a6a" stroke-width="1.5"/><text x="61" y="62" font-family="Liberation Sans" font-size="12" fill="#333" text-anchor="middle">3D</text><path d="M58 38 L61 33 L64 38 Z" fill="#e33"/></svg>
<svg class="s" style="left:1030px;top:1702px;" width="78" height="78" viewBox="0 0 78 78"><circle cx="39" cy="39" r="38" fill="#efefef"/><g transform="translate(39 39)"><ellipse cx="0" cy="-15" rx="9" ry="15" fill="#f7a533" opacity=".82" transform="rotate(0)"/><ellipse cx="0" cy="-15" rx="9" ry="15" fill="#f4d33b" opacity=".82" transform="rotate(45)"/><ellipse cx="0" cy="-15" rx="9" ry="15" fill="#8ccd4c" opacity=".82" transform="rotate(90)"/><ellipse cx="0" cy="-15" rx="9" ry="15" fill="#3fb99a" opacity=".82" transform="rotate(135)"/><ellipse cx="0" cy="-15" rx="9" ry="15" fill="#4a8fd6" opacity=".82" transform="rotate(180)"/><ellipse cx="0" cy="-15" rx="9" ry="15" fill="#7b65c4" opacity=".82" transform="rotate(225)"/><ellipse cx="0" cy="-15" rx="9" ry="15" fill="#d45aa0" opacity=".82" transform="rotate(270)"/><ellipse cx="0" cy="-15" rx="9" ry="15" fill="#ec5b4b" opacity=".82" transform="rotate(315)"/></g></svg>
<svg class="s" style="left:1123px;top:1705px;" width="80" height="74" viewBox="0 0 80 74"><defs><linearGradient id="msg" x1="0" y1="0" x2="0" y2="1"><stop offset="0" stop-color="#63d0fb"/><stop offset="1" stop-color="#1f8ef0"/></linearGradient></defs><ellipse cx="38" cy="30" rx="38" ry="29" fill="url(#msg)"/><path d="M12 50 L4 68 L26 56 Z" fill="#1f8ef0"/><ellipse cx="54" cy="50" rx="25" ry="19" fill="#eef4f8"/><path d="M62 64 L70 74 L64 62 Z" fill="#eef4f8"/><circle cx="44" cy="50" r="3.2" fill="#2266aa"/><circle cx="54" cy="50" r="3.2" fill="#2266aa"/><circle cx="64" cy="50" r="3.2" fill="#2266aa"/></svg>
<svg class="s" style="left:1216px;top:1701px;" width="80" height="80" viewBox="0 0 80 80"><defs><linearGradient id="itg" x1="0" y1="0" x2="1" y2="1"><stop offset="0" stop-color="#f8577d"/><stop offset="1" stop-color="#8a5cf6"/></linearGradient></defs><circle cx="40" cy="40" r="39" fill="url(#itg)"/><circle cx="40" cy="40" r="34.5" fill="#f4f4f6"/><path d="M32 54 V22 L56 17 V48" fill="none" stroke="url(#itg)" stroke-width="5"/><circle cx="27" cy="55" r="7" fill="#c25fd0"/><circle cx="51" cy="50" r="7" fill="#6c8df0"/></svg>
<svg class="s" style="left:1311px;top:1707px;" width="82" height="70" viewBox="0 0 82 70"><defs><linearGradient id="ftg" x1="0" y1="0" x2="0" y2="1"><stop offset="0" stop-color="#4ef07c"/><stop offset="1" stop-color="#12c03a"/></linearGradient></defs><rect x="0" y="0" width="70" height="64" rx="14" fill="url(#ftg)"/><rect x="12" y="16" width="34" height="32" rx="6" fill="#f2f2f2"/><path d="M48 28 L60 18 V46 L48 38 Z" fill="#f2f2f2"/><circle cx="60" cy="52" r="17" fill="#f2f2f2"/><path d="M53 45 C53 55 60 60 67 60 L68 55 L63 53 L61 56 C58 55 56 53 55 50 L58 48 L56 43 Z" fill="#2fc74c"/></svg>
<div class="r" style="left:1362px;top:1696px;width:34px;height:34px;border-radius:50%;background:#f0413a;box-shadow:0 1px 2px rgba(0,0,0,.25)"></div>
<div class="t" style="left:1379px;top:1713.53px;font-size:23px;font-family:'Liberation Sans', sans-serif;font-weight:400;color:#fff;font-style:normal;transform:translateX(-50%);">13</div>
<svg class="s" style="left:1405px;top:1706px;" width="79" height="70" viewBox="0 0 79 70"><rect x="22" y="0" width="56" height="50" rx="4" fill="#1171d6"/><rect x="50" y="0" width="28" height="28" fill="#37b7f5"/><rect x="22" y="14" width="28" height="28" fill="#1590e0"/><path d="M22 36 L50 52 L78 36 V66 A4 4 0 0 1 74 70 H26 A4 4 0 0 1 22 66 Z" fill="#1a8fe3"/><path d="M22 70 L78 36 V66 A4 4 0 0 1 74 70 Z" fill="#2ba7f0" opacity=".7"/><rect x="1" y="14" width="40" height="40" rx="4" fill="#0e5fb8"/><text x="21" y="44" font-family="Liberation Sans" font-weight="700" font-size="28" fill="#fff" text-anchor="middle">O</text></svg>
<svg class="s" style="left:1502px;top:1698px;" width="72" height="84" viewBox="0 0 72 84"><g transform="rotate(-7 36 42)"><rect x="6" y="6" width="58" height="74" fill="#fff"/><path d="M6 6 H64 V20 H6 Z" fill="#f5972a"/><text x="12" y="17" font-family="Liberation Sans" font-size="10" fill="#fff">PAGES</text><rect x="12" y="26" width="24" height="20" fill="#3c82d6"/><circle cx="24" cy="36" r="6" fill="#f29a2a"/><path d="M40 28 H58 M40 34 H58 M40 40 H58 M12 52 H58 M12 58 H58 M12 64 H58" stroke="#aaa" stroke-width="1.3"/></g><path d="M62 6 L36 76" stroke="#f5a623" stroke-width="6" stroke-linecap="round"/><path d="M38 70 L34 80" stroke="#333" stroke-width="3"/></svg>
<svg class="s" style="left:1593px;top:1704px;" width="80" height="75" viewBox="0 0 80 75"><rect x="2" y="42" width="76" height="32" fill="#f2f2f2"/><rect x="12" y="36" width="13" height="34" rx="2" fill="#e53749"/><rect x="28" y="22" width="13" height="48" rx="2" fill="#f28a23"/><rect x="44" y="2" width="13" height="68" rx="2" fill="#2ac75a"/><rect x="60" y="14" width="13" height="56" rx="2" fill="#2f97ec"/></svg>
<svg class="s" style="left:1690px;top:1701px;" width="74" height="82" viewBox="0 0 74 82"><path d="M8 2 H66 L72 30 H2 Z" fill="#2e8ee6"/><rect x="14" y="5" width="46" height="22" fill="#f3f3f3"/><circle cx="27" cy="17" r="7" fill="#f2b234"/><path d="M27 17 V10 A7 7 0 0 1 34 17 Z" fill="#4bb6ef"/><path d="M36 11 H56 M36 15 H56 M36 19 H56 M36 23 H56" stroke="#9a9a9a" stroke-width="1.2"/><rect x="2" y="30" width="70" height="4" fill="#1f6cc6"/><rect x="34" y="34" width="6" height="38" fill="#c7ced4"/><ellipse cx="37" cy="76" rx="18" ry="5" fill="#b7c0c8"/></svg>
<svg class="s" style="left:1781px;top:1701px;" width="80" height="80" viewBox="0 0 80 80"><defs><linearGradient id="nwg" x1="0" y1="0" x2="0" y2="1"><stop offset="0" stop-color="#fefefe"/><stop offset="1" stop-color="#dedede"/></linearGradient></defs><circle cx="40" cy="40" r="39.5" fill="#fb3e5e"/><circle cx="40" cy="40" r="35.5" fill="url(#nwg)"/><path d="M19 24 Q19 20 23 20 H30 L63 53 V61 Q63 64 60 64 H53 L19 30 Z M43 20 H60 Q63 20 63 24 V48 Q58 30 43 20 Z M19 53 Q26 61 38 64 H22 Q19 64 19 61 Z" fill="#fa4262"/></svg>
<svg class="s" style="left:1876px;top:1704px;" width="79" height="75" viewBox="0 0 79 75"><defs><linearGradient id="spg" x1="0" y1="0" x2="0" y2="1"><stop offset="0" stop-color="#cfdde6"/><stop offset=".5" stop-color="#a3a9ad"/><stop offset="1" stop-color="#7a7a7a"/></linearGradient></defs><rect x="0" y="0" width="79" height="75" rx="5" fill="url(#spg)"/><circle cx="39.5" cy="37.5" r="32" fill="#2e2e2e"/><circle cx="39.5" cy="37.5" r="25.5" fill="none" stroke="#bdbab5" stroke-width="7" stroke-dasharray="3.2 3.4"/><circle cx="39.5" cy="37.5" r="21" fill="#4a4a4a" stroke="#b9b6b1" stroke-width="3"/><g stroke="#b9b6b1" stroke-width="5.5" stroke-linecap="round"><path d="M39.5 37.5 L60 37.5"/><path d="M39.5 37.5 L29 19.5"/><path d="M39.5 37.5 L29 55.5"/></g><circle cx="39.5" cy="37.5" r="3" fill="#ddd"/></svg>
<div class="r" style="left:1926px;top:1696px;width:34px;height:34px;border-radius:50%;background:#f0413a;box-shadow:0 1px 2px rgba(0,0,0,.25)"></div>
<div class="t" style="left:1943px;top:1713.53px;font-size:23px;font-family:'Liberation Sans', sans-serif;font-weight:400;color:#fff;font-style:normal;transform:translateX(-50%);">2</div>
<svg class="s" style="left:1970px;top:1702px;" width="78" height="78" viewBox="0 0 78 78"><circle cx="39" cy="39" r="38" fill="#1da355"/><path d="M39 1 A38 38 0 0 1 72 20 H39 Z M6 20 A38 38 0 0 1 39 1 V20 Z" fill="#e1463b"/><path d="M6 20 L39 20 L22 50 Z" fill="#e1463b"/><path d="M72 20 A38 38 0 0 1 39 77 L56 48 L39 20 Z" fill="#fbc52d"/><circle cx="39" cy="39" r="16" fill="#fff"/><circle cx="39" cy="39" r="12.5" fill="#4a89f0"/></svg>
<svg class="s" style="left:2062px;top:1702px;" width="82" height="80" viewBox="0 0 82 80"><circle cx="41" cy="39" r="38" fill="#d35230"/><path d="M41 1 A38 38 0 0 1 79 39 H41 Z" fill="#ff8f6b"/><rect x="1" y="19" width="40" height="40" rx="4" fill="#b7381c"/><text x="21" y="50" font-family="Liberation Sans" font-weight="700" font-size="28" fill="#fff" text-anchor="middle">P</text></svg>
<div class="r" style="left:2097.9px;top:1787px;width:9px;height:9px;border-radius:50%;background:#4a3410"></div>
<svg class="s" style="left:2157px;top:1701px;" width="80" height="80" viewBox="0 0 80 80"><defs><linearGradient id="zg" x1="0" y1="0" x2="0" y2="1"><stop offset="0" stop-color="#4a9cff"/><stop offset="1" stop-color="#2a6fe8"/></linearGradient></defs><rect x="0" y="0" width="80" height="80" rx="22" fill="url(#zg)"/><rect x="16" y="27" width="36" height="27" rx="7" fill="#fff"/><path d="M54 36 L65 28 V54 L54 46 Z" fill="#fff"/></svg>
<svg class="s" style="left:2251px;top:1707px;" width="79" height="69" viewBox="0 0 79 69"><rect x="19" y="0" width="60" height="69" rx="4" fill="#41a5ee"/><rect x="19" y="17" width="60" height="18" fill="#2b7cd3"/><rect x="19" y="35" width="60" height="17" fill="#185abd"/><path d="M19 52 H79 V65 A4 4 0 0 1 75 69 H23 A4 4 0 0 1 19 65 Z" fill="#103f91"/><rect x="0" y="14" width="40" height="40" rx="4" fill="#185abd"/><text x="20" y="45" font-family="Liberation Sans" font-weight="700" font-size="26" fill="#fff" text-anchor="middle">W</text></svg>
<div class="r" style="left:2285.2px;top:1787px;width:9px;height:9px;border-radius:50%;background:#4a3410"></div>
<div class="r" style="left:2358px;top:1716px;width:2px;height:56px;background:#4a4a45"></div>
<svg class="s" style="left:2387px;top:1707px;" width="79" height="69" viewBox="0 0 79 69"><rect x="19" y="0" width="60" height="69" rx="4" fill="#185c37"/><path d="M23 0 H49 V17 H19 V4 A4 4 0 0 1 23 0 Z" fill="#21a366"/><path d="M49 0 H75 A4 4 0 0 1 79 4 V17 H49 Z" fill="#33c481"/><rect x="19" y="17" width="30" height="18" fill="#107c41"/><rect x="49" y="17" width="30" height="18" fill="#21a366"/><rect x="19" y="35" width="30" height="17" fill="#185c37"/><rect x="49" y="35" width="30" height="17" fill="#107c41"/><rect x="0" y="14" width="40" height="40" rx="4" fill="#107c41"/><text x="20" y="45" font-family="Liberation Sans" font-weight="700" font-size="27" fill="#fff" text-anchor="middle">X</text></svg>
<div class="r" style="left:2421.5px;top:1787px;width:9px;height:9px;border-radius:50%;background:#1a1a1a"></div>
<svg class="s" style="left:2480px;top:1706px;" width="84" height="72" viewBox="0 0 84 72"><rect x="12" y="0" width="66" height="52" fill="#fff"/><rect x="15" y="3" width="60" height="46" fill="#b99a6a"/><g transform="rotate(-8 35 40)"><rect x="2" y="14" width="66" height="54" fill="#fff"/><rect x="5" y="17" width="60" height="48" fill="#7fb3e6"/><rect x="5" y="42" width="60" height="23" fill="#2b5f8a"/><path d="M5 56 C20 48 40 60 65 54 V65 H5 Z" fill="#e8eef2"/></g><circle cx="66" cy="54" r="15" fill="#8a8a8a"/><circle cx="66" cy="54" r="11" fill="#c9d2d8"/></svg>
<svg class="s" style="left:2575px;top:1706px;" width="79" height="70" viewBox="0 0 79 70"><circle cx="48" cy="12" r="11" fill="#7b83eb"/><circle cx="68" cy="17" r="7.5" fill="#5059c9"/><path d="M56 28 H78 V50 C78 60 72 64 66 64 C60 64 56 58 56 50 Z" fill="#5059c9"/><path d="M28 28 H66 V52 C66 62 58 70 47 70 C36 70 28 62 28 52 Z" fill="#7b83eb"/><rect x="0" y="16" width="40" height="40" rx="4" fill="#4b53bc"/><text x="20" y="46" font-family="Liberation Sans" font-weight="700" font-size="26" fill="#fff" text-anchor="middle">T</text></svg>
<div class="r" style="left:2682px;top:1703px;width:2px;height:83px;background:#4a4a45"></div>
<svg class="s" style="left:2718px;top:1697px;" width="66" height="84" viewBox="0 0 66 84"><path d="M3 14 L10 80 C10 82 14 84 33 84 C52 84 56 82 56 80 L63 14 Z" fill="#dfe3e6" opacity=".92"/><ellipse cx="33" cy="14" rx="30" ry="7" fill="#c8ccd0"/><path d="M10 10 L18 2 L26 8 L34 0 L44 8 L54 4 L58 12 Z" fill="#9aa3aa"/><path d="M22 8 L28 4 L33 10 Z" fill="#3b7fd0"/><path d="M40 6 L46 3 L48 10 Z" fill="#e05050"/></svg>
</body></html>
